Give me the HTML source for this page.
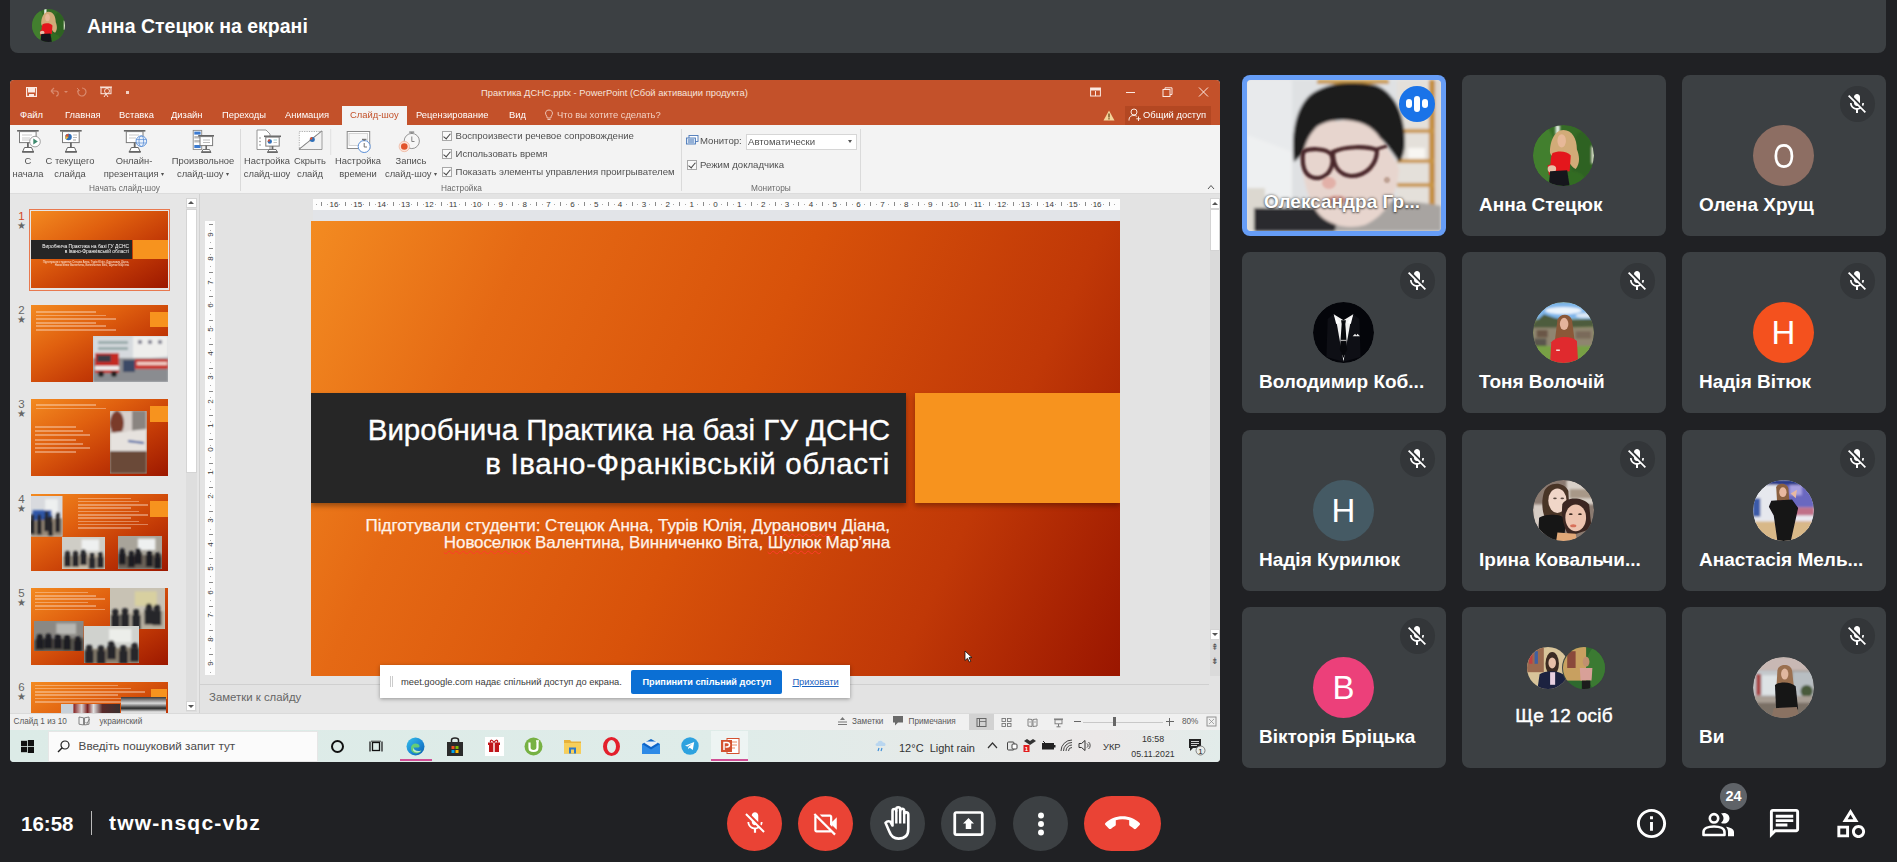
<!DOCTYPE html>
<html><head><meta charset="utf-8">
<style>
*{box-sizing:border-box;margin:0;padding:0}
html,body{width:1897px;height:862px;overflow:hidden;background:#202124;font-family:"Liberation Sans",sans-serif;position:relative}
.a{position:absolute}
.topbar{left:10px;top:0;width:1876px;height:53px;background:#3c4043;border-radius:0 0 8px 8px}
.tile{position:absolute;width:204px;height:161px;background:#3c4043;border-radius:8px;overflow:hidden}
.name{position:absolute;left:17px;top:119px;color:#fff;font-size:19px;font-weight:bold;white-space:nowrap}
.mute{position:absolute;left:157.5px;top:11px;width:35.5px;height:35.5px;border-radius:50%;background:#333639}
.av{position:absolute;left:71px;top:50px;width:61px;height:61px;border-radius:50%;color:#fff;font-size:33px;text-align:center;line-height:62px}
.btn{position:absolute;top:796px;width:55px;height:55px;border-radius:50%;background:#3c4043}
.red{background:#ea4335}
.tabs{color:#fff;font-size:9.4px;white-space:nowrap}
.pt{white-space:nowrap}
.rl{font-size:9.4px;color:#505050;text-align:center;line-height:12.5px;white-space:nowrap}
.rt{font-size:9.6px;color:#505050;line-height:12.5px;white-space:nowrap}
.gl{color:#6a6a6a;font-size:8.3px}
.dd{font-size:6px;vertical-align:1px}
.rn{font-size:8px;color:#3a3a3a;width:12px;text-align:center;line-height:7px}
.sq{text-decoration:underline wavy #ff3b2b;text-decoration-thickness:1.2px;text-underline-offset:1.5px}
.st{font-size:8.2px;color:#5a5a5a;white-space:nowrap;line-height:11px}
.sbi{font-size:9px;color:#555;width:10px;text-align:center;line-height:10px}
.tn{font-size:11.5px;line-height:12px;width:8px;text-align:center}
.ts{font-size:10px;color:#666;line-height:10px;width:11px;text-align:center}
.cb{width:10px;height:10px;border:1px solid #a8a8a8;background:#fafafa}
.cb::after{content:"";position:absolute;left:2px;top:0px;width:3px;height:6px;border:solid #444;border-width:0 1.2px 1.2px 0;transform:rotate(40deg)}
</style></head><body>
<!-- top bar -->
<div class="a topbar"></div>
<svg class="a" style="left:32px;top:9px" width="33" height="33" viewBox="0 0 100 100"><use href="#anna"/></svg>
<div class="a" style="left:87px;top:14.5px;color:#fff;font-size:19.5px;font-weight:bold;white-space:nowrap">Анна Стецюк на екрані</div>

<!-- PPT window placeholder -->
<div class="a" id="ppt" style="left:10px;top:80px;width:1210px;height:682px;background:#e4e4e4;border-radius:4px;overflow:hidden;filter:blur(0.35px)">
<!-- title+tabs -->
<div class="a" style="left:0;top:0;width:1210px;height:45px;background:#c3512a"></div>
<div class="a pt" style="left:471px;top:7px;color:#f6e4dc;font-size:9.4px">Практика ДСНС.pptx - PowerPoint (Сбой активации продукта)</div>
<div class="a tabs" style="top:29px;left:10px">Файл</div>
<div class="a tabs" style="top:29px;left:55px">Главная</div>
<div class="a tabs" style="top:29px;left:109px">Вставка</div>
<div class="a tabs" style="top:29px;left:161px">Дизайн</div>
<div class="a tabs" style="top:29px;left:212px">Переходы</div>
<div class="a tabs" style="top:29px;left:275px">Анимация</div>
<div class="a" style="left:332px;top:26px;width:65px;height:19px;background:#f3f3f3"></div>
<div class="a tabs" style="top:29px;left:340px;color:#c3512a">Слайд-шоу</div>
<div class="a tabs" style="top:29px;left:406px">Рецензирование</div>
<div class="a tabs" style="top:29px;left:499px">Вид</div>
<div class="a tabs" style="top:29px;left:547px;color:#f2d0c2">Что вы хотите сделать?</div>
<div class="a" style="left:1115px;top:26px;width:86px;height:19px;background:#b34722"></div>
<div class="a tabs" style="top:29px;left:1133px">Общий доступ</div>
<!-- ribbon -->
<div class="a" style="left:0;top:45px;width:1210px;height:69px;background:#f3f3f3;border-bottom:1px solid #dcdcdc"></div>
<!-- title bar icons -->
<svg class="a" style="left:15.5px;top:7px" width="11" height="10" viewBox="0 0 11 10"><rect x="0.6" y="0.6" width="9.8" height="8.8" fill="none" stroke="#fbe9e2" stroke-width="1.2"/><rect x="2" y="1" width="7" height="4.5" fill="#fbe9e2"/><rect x="3" y="7" width="5" height="2.5" fill="#fbe9e2"/></svg>
<svg class="a" style="left:39px;top:7px" width="22" height="10" viewBox="0 0 22 10"><path d="M2,4 L5,1 M2,4 L5,7 M2,4 H7 C10,4 10,9 7,9" fill="none" stroke="#d98a6e" stroke-width="1.2"/><path d="M15,4 L17,6 L19,4 Z" fill="#d98a6e"/></svg>
<svg class="a" style="left:66px;top:7px" width="11" height="10" viewBox="0 0 11 10"><path d="M6,1 A4,4 0 1 1 2.5,3" fill="none" stroke="#d98a6e" stroke-width="1.2"/><path d="M1,1 L3.5,3.5 L1,4.5" fill="none" stroke="#d98a6e" stroke-width="1"/></svg>
<svg class="a" style="left:89px;top:5.5px" width="14" height="12" viewBox="0 0 14 12"><rect x="1" y="0.5" width="12" height="1.2" fill="#fbe9e2"/><rect x="2" y="1.7" width="10" height="6" fill="none" stroke="#fbe9e2" stroke-width="1"/><circle cx="8" cy="5" r="2.5" fill="none" stroke="#fbe9e2" stroke-width="0.9"/><path d="M7,8 L5,11 M7,8 L9,11" stroke="#fbe9e2" stroke-width="1"/></svg>
<div class="a" style="left:115.5px;top:11px;width:3px;height:3px;background:#f2d0c2"></div>
<svg class="a" style="left:1080px;top:7px" width="11" height="10" viewBox="0 0 11 10"><rect x="0.6" y="1" width="9.8" height="8" fill="none" stroke="#fbe9e2" stroke-width="1"/><rect x="0.6" y="1" width="9.8" height="2.5" fill="#fbe9e2"/><path d="M5.5,4 V9" stroke="#fbe9e2" stroke-width="1"/></svg>
<div class="a" style="left:1116px;top:12px;width:9px;height:1px;background:#fbe9e2"></div>
<svg class="a" style="left:1152px;top:7px" width="11" height="10" viewBox="0 0 11 10"><rect x="1" y="2.5" width="7" height="7" fill="none" stroke="#fbe9e2" stroke-width="1"/><path d="M3,2.5 V0.8 H10 V7.5 H8" fill="none" stroke="#fbe9e2" stroke-width="1"/></svg>
<svg class="a" style="left:1188px;top:7px" width="11" height="10" viewBox="0 0 11 10"><path d="M1,0.5 L10,9.5 M10,0.5 L1,9.5" stroke="#fbe9e2" stroke-width="1"/></svg>
<svg class="a" style="left:533.5px;top:29px" width="10" height="12" viewBox="0 0 10 12"><path d="M5,1 C2,1 1,3.5 1.8,5.5 C2.5,7 3.2,7.5 3.2,9 H6.8 C6.8,7.5 7.5,7 8.2,5.5 C9,3.5 8,1 5,1 Z" fill="none" stroke="#f2d0c2" stroke-width="0.9"/><path d="M3.5,10.5 H6.5" stroke="#f2d0c2" stroke-width="0.9"/></svg>
<svg class="a" style="left:1093px;top:29.5px" width="12" height="11" viewBox="0 0 12 11"><path d="M6,0.5 L11.5,10.5 H0.5 Z" fill="#f4d49a"/><rect x="5.4" y="3.5" width="1.2" height="4" fill="#5a3a10"/><rect x="5.4" y="8.2" width="1.2" height="1.2" fill="#5a3a10"/></svg>
<svg class="a" style="left:1118px;top:28px" width="14" height="14" viewBox="0 0 14 14"><circle cx="6" cy="4" r="3" fill="none" stroke="#fbe9e2" stroke-width="1"/><path d="M1,12.5 C1,8.5 3,7.5 6,7.5 C7.5,7.5 8.5,8 9,8.5" fill="none" stroke="#fbe9e2" stroke-width="1"/><path d="M10.5,8.5 V13 M8.3,10.8 H12.7" stroke="#fbe9e2" stroke-width="1"/></svg>
<!-- collapse ribbon arrow -->
<svg class="a" style="left:1197px;top:104px" width="8" height="6" viewBox="0 0 8 6"><path d="M1,5 L4,1.5 L7,5" fill="none" stroke="#555" stroke-width="1"/></svg>
<!-- monitor icon -->
<svg class="a" style="left:676px;top:55px" width="13" height="11" viewBox="0 0 13 11"><rect x="3" y="0.5" width="9" height="6" fill="#fff" stroke="#4a78b8" stroke-width="0.9"/><rect x="0.5" y="3" width="9" height="6" fill="#dbe7f5" stroke="#4a78b8" stroke-width="0.9"/><rect x="2" y="4.5" width="6" height="1" fill="#4a78b8"/><rect x="2" y="6.5" width="6" height="1" fill="#4a78b8"/></svg>
<!-- ribbon content -->
<div class="a rl" style="left:-2px;top:75px;width:40px">С<br>начала</div>
<div class="a rl" style="left:30px;top:75px;width:60px">С текущего<br>слайда</div>
<div class="a rl" style="left:84px;top:75px;width:80px">Онлайн-<br>презентация <span class="dd">▾</span></div>
<div class="a rl" style="left:153px;top:75px;width:80px">Произвольное<br>слайд-шоу <span class="dd">▾</span></div>
<div class="a rl gl" style="left:54.5px;top:102px;width:120px">Начать слайд-шоу</div>
<div class="a" style="left:230px;top:49px;width:1px;height:62px;background:#dadada"></div>
<div class="a rl" style="left:227px;top:75px;width:60px">Настройка<br>слайд-шоу</div>
<div class="a rl" style="left:280px;top:75px;width:40px">Скрыть<br>слайд</div>
<div class="a rl" style="left:318px;top:75px;width:60px">Настройка<br>времени</div>
<div class="a rl" style="left:366px;top:75px;width:70px">Запись<br>слайд-шоу <span class="dd">▾</span></div>
<div class="a cb" style="left:432px;top:51px"></div>
<div class="a cb" style="left:432px;top:69px"></div>
<div class="a cb" style="left:432px;top:87px"></div>
<div class="a rt" style="left:445.5px;top:50px">Воспроизвести речевое сопровождение</div>
<div class="a rt" style="left:445.5px;top:68px">Использовать время</div>
<div class="a rt" style="left:445.5px;top:86px">Показать элементы управления проигрывателем</div>
<div class="a rt gl" style="left:431px;top:102px">Настройка</div>
<div class="a" style="left:671px;top:49px;width:1px;height:62px;background:#dadada"></div>
<div class="a rt" style="left:690px;top:55px">Монитор:</div>
<div class="a" style="left:736px;top:54px;width:111px;height:16px;background:#fff;border:1px solid #d6d6d6"></div>
<div class="a rt" style="left:738px;top:56px">Автоматически</div>
<div class="a" style="left:838px;top:60px;width:0;height:0;border-left:2.5px solid transparent;border-right:2.5px solid transparent;border-top:3px solid #555"></div>
<div class="a cb" style="left:677px;top:80px"></div>
<div class="a rt" style="left:690px;top:79px">Режим докладчика</div>
<div class="a rt gl" style="left:741px;top:102px">Мониторы</div>
<div class="a" style="left:850px;top:49px;width:1px;height:62px;background:#dadada"></div>
<!-- ribbon icons -->
<svg class="a" style="left:0;top:45px" width="440" height="30" viewBox="0 0 440 30">
 <g transform="translate(0,-45)">
 <!-- icon1 -->
 <rect x="7.1" y="50" width="21.6" height="1.6" fill="#666"/>
 <rect x="9.5" y="51.6" width="16.6" height="11" fill="#fff" stroke="#7a7a7a" stroke-width="1"/>
 <line x1="12" y1="55" x2="22" y2="55" stroke="#bbb" stroke-width="0.8"/><line x1="12" y1="58" x2="20" y2="58" stroke="#bbb" stroke-width="0.8"/><line x1="12" y1="60" x2="20" y2="60" stroke="#bbb" stroke-width="0.8"/>
 <rect x="17" y="62.6" width="1.8" height="7" fill="#666"/>
 <path d="M12.5,72 L14.5,67.5 L21.5,67.5 L23.5,72 Z" fill="#fff" stroke="#666" stroke-width="1"/>
 <rect x="12" y="71" width="12" height="1.6" fill="#666"/>
 <circle cx="25" cy="61.6" r="5.3" fill="#fff" stroke="#888" stroke-width="0.8"/>
 <path d="M23.3,58.6 L27.8,61.6 L23.3,64.6 Z" fill="#3d8a6e"/>
 <!-- icon2 -->
 <rect x="50" y="50" width="21.7" height="1.6" fill="#666"/>
 <rect x="52.5" y="51.6" width="16.7" height="11" fill="#fff" stroke="#7a7a7a" stroke-width="1"/>
 <circle cx="58.5" cy="57" r="3.3" fill="#2f6fb7"/><path d="M58.5,57 L58.5,53.7 A3.3,3.3 0 0 0 55.3,56.3 Z" fill="#e0532a"/><path d="M58.5,57 L55.3,56.3 A3.3,3.3 0 0 0 56.3,59.4 Z" fill="#f2b632"/>
 <line x1="63" y1="55" x2="67" y2="55" stroke="#aaa" stroke-width="0.8"/><line x1="63" y1="57.5" x2="67" y2="57.5" stroke="#aaa" stroke-width="0.8"/><line x1="63" y1="60" x2="66" y2="60" stroke="#888" stroke-width="0.8"/>
 <rect x="60" y="62.6" width="1.8" height="7" fill="#666"/>
 <path d="M55.5,72 L57.5,67.5 L64.5,67.5 L66.5,72 Z" fill="#fff" stroke="#666" stroke-width="1"/>
 <rect x="55" y="71" width="12" height="1.6" fill="#666"/>
 <!-- icon3 -->
 <rect x="113.9" y="50" width="21.5" height="1.6" fill="#666"/>
 <rect x="116.3" y="51.6" width="16.7" height="11" fill="#fff" stroke="#7a7a7a" stroke-width="1"/>
 <line x1="119" y1="55" x2="129" y2="55" stroke="#bbb" stroke-width="0.8"/><line x1="119" y1="58" x2="126" y2="58" stroke="#bbb" stroke-width="0.8"/>
 <rect x="123.8" y="62.6" width="1.8" height="7" fill="#666"/>
 <path d="M119.3,72 L121.3,67.5 L128.3,67.5 L130.3,72 Z" fill="#fff" stroke="#666" stroke-width="1"/>
 <rect x="118.8" y="71" width="12" height="1.6" fill="#666"/>
 <circle cx="131.3" cy="61.2" r="5.3" fill="#e8f0fb" stroke="#5b8fd6" stroke-width="0.9"/>
 <ellipse cx="131.3" cy="61.2" rx="2.3" ry="5.3" fill="none" stroke="#5b8fd6" stroke-width="0.8"/>
 <line x1="126" y1="59.5" x2="136.6" y2="59.5" stroke="#5b8fd6" stroke-width="0.7"/><line x1="126" y1="63" x2="136.6" y2="63" stroke="#5b8fd6" stroke-width="0.7"/>
 <!-- icon4 -->
 <rect x="183.2" y="50.4" width="8.5" height="19" fill="#fff" stroke="#888" stroke-width="0.9"/>
 <rect x="184.3" y="51.6" width="6.3" height="3" fill="#3b7ad0"/><rect x="184.3" y="56" width="6.3" height="2.5" fill="#bbb"/><rect x="184.3" y="60" width="6.3" height="2.5" fill="#bbb"/><rect x="184.3" y="65" width="6.3" height="3" fill="#3b7ad0"/>
 <rect x="188.2" y="55" width="15.8" height="1.6" fill="#666"/>
 <rect x="190" y="56.6" width="12.6" height="9" fill="#fff" stroke="#7a7a7a" stroke-width="1"/>
 <line x1="193" y1="60" x2="200" y2="60" stroke="#aaa" stroke-width="0.8"/><line x1="193" y1="62.5" x2="200" y2="62.5" stroke="#aaa" stroke-width="0.8"/>
 <rect x="195.4" y="65.6" width="1.6" height="4" fill="#666"/>
 <path d="M191.5,72.5 L193,69.5 L199.5,69.5 L201,72.5 Z" fill="#fff" stroke="#666" stroke-width="0.9"/>
 <rect x="191.5" y="71.2" width="9.5" height="1.5" fill="#666"/>
 <!-- icon5 -->
 <path d="M247,50 L256,50 L260,54 L260,69.5 L247,69.5 Z" fill="#fff" stroke="#8a8a8a" stroke-width="0.9"/>
 <circle cx="250" cy="58" r="0.8" fill="#888"/><circle cx="250" cy="61.5" r="0.8" fill="#888"/><circle cx="250" cy="65" r="0.8" fill="#888"/>
 <rect x="254" y="55.5" width="17" height="1.6" fill="#666"/>
 <rect x="255.8" y="57.1" width="13.4" height="9" fill="#fff" stroke="#7a7a7a" stroke-width="1"/>
 <circle cx="259.8" cy="61.5" r="2.2" fill="#2f6fb7"/><path d="M259.8,61.5 L259.8,59.3 A2.2,2.2 0 0 0 257.6,61.5 Z" fill="#e0532a"/>
 <line x1="263.5" y1="60" x2="267" y2="60" stroke="#7bb" stroke-width="0.7"/><line x1="263.5" y1="62.5" x2="267" y2="62.5" stroke="#aaa" stroke-width="0.7"/>
 <rect x="261.6" y="66.1" width="1.8" height="3.5" fill="#666"/>
 <path d="M257.5,72.5 L259,69.5 L266,69.5 L267.5,72.5 Z" fill="#fff" stroke="#666" stroke-width="0.9"/>
 <rect x="257.5" y="71.2" width="10" height="1.5" fill="#666"/>
 <!-- icon6 -->
 <rect x="289.3" y="51.5" width="22" height="17.5" fill="#fff" stroke="#999" stroke-width="0.8" stroke-dasharray="1.2 1.2"/>
 <path d="M289,69.5 L312,51" stroke="#777" stroke-width="1.1"/>
 <path d="M289,69.5 L312,51 L312,69.5 Z" fill="#f2f2f2" stroke="#888" stroke-width="0.8"/>
 <circle cx="302.3" cy="59.4" r="2.5" fill="#2f6fb7"/><path d="M302.3,59.4 L299.8,59.4 A2.5,2.5 0 0 1 302.3,56.9 Z" fill="#e0532a"/>
 <line x1="320.7" y1="49" x2="320.7" y2="111" stroke="#e0e0e0" stroke-width="1"/>
 <!-- icon7 -->
 <rect x="337.2" y="51.5" width="22.5" height="17" fill="#fff" stroke="#8a8a8a" stroke-width="1"/>
 <rect x="339" y="53.5" width="18.5" height="12" fill="#f7f7f7" stroke="#bbb" stroke-width="0.6"/>
 <circle cx="354.2" cy="66.5" r="6" fill="#fff" stroke="#5b8fd6" stroke-width="1"/>
 <rect x="352" y="58.8" width="4.4" height="1.2" fill="#777"/><rect x="353.6" y="59.8" width="1.2" height="1.4" fill="#777"/>
 <path d="M354.2,63 L354.2,67 L357,67" fill="none" stroke="#666" stroke-width="0.9"/>
 <!-- icon8 -->
 <circle cx="401.8" cy="61" r="7.6" fill="#f6f6f6" stroke="#8a8a8a" stroke-width="0.9"/>
 <rect x="399.2" y="51.5" width="5" height="1.2" fill="#777"/><rect x="401.1" y="52.6" width="1.2" height="1" fill="#777"/>
 <path d="M401.8,56.5 L401.8,61.5 L404.5,61.5" fill="none" stroke="#777" stroke-width="0.9"/>
 <circle cx="394.3" cy="66.5" r="5.2" fill="#fbe3d8" stroke="#e9a58a" stroke-width="0.6"/>
 <circle cx="394.3" cy="66.5" r="3.3" fill="#e2532a"/>
 </g>
</svg>
<!-- slide panel -->
<div class="a" style="left:0;top:114px;width:190px;height:519px;background:#e6e6e6"></div>
<div class="a" style="left:189px;top:114px;width:1px;height:519px;background:#d2d2d2"></div>
<!-- editor -->
<div class="a" style="left:190px;top:114px;width:1020px;height:519px;background:#e3e3e3"></div>
<!-- thumbs -->
<div class="a" style="left:0;top:114px;width:189px;height:519px;overflow:hidden">
<div class="a tn" style="left:7.5px;top:16.0px;color:#d24726">1</div>
<div class="a ts" style="left:6.0px;top:27.0px">★</div>
<div class="a" style="left:19.0px;top:14.5px;width:141.0px;height:82.0px;background:none;border:1.5px solid #e8794f"></div>
<div class="a" style="left:21.0px;top:17.0px;width:137.0px;height:77.0px;background:linear-gradient(150deg,#f38a20 0%,#e0600f 35%,#c43b06 65%,#9c1800 100%);"></div>
<div class="a tn" style="left:7.5px;top:110.0px;color:#666">2</div>
<div class="a ts" style="left:6.0px;top:121.0px">★</div>
<div class="a" style="left:21.0px;top:111.0px;width:137.0px;height:77.0px;background:linear-gradient(150deg,#f38a20 0%,#e0600f 35%,#c43b06 65%,#9c1800 100%);"></div>
<div class="a tn" style="left:7.5px;top:204.0px;color:#666">3</div>
<div class="a ts" style="left:6.0px;top:215.0px">★</div>
<div class="a" style="left:21.0px;top:205.0px;width:137.0px;height:77.0px;background:linear-gradient(150deg,#f38a20 0%,#e0600f 35%,#c43b06 65%,#9c1800 100%);"></div>
<div class="a tn" style="left:7.5px;top:298.5px;color:#666">4</div>
<div class="a ts" style="left:6.0px;top:309.5px">★</div>
<div class="a" style="left:21.0px;top:299.5px;width:137.0px;height:77.0px;background:linear-gradient(150deg,#f38a20 0%,#e0600f 35%,#c43b06 65%,#9c1800 100%);"></div>
<div class="a tn" style="left:7.5px;top:392.5px;color:#666">5</div>
<div class="a ts" style="left:6.0px;top:403.5px">★</div>
<div class="a" style="left:21.0px;top:393.5px;width:137.0px;height:77.0px;background:linear-gradient(150deg,#f38a20 0%,#e0600f 35%,#c43b06 65%,#9c1800 100%);"></div>
<div class="a tn" style="left:7.5px;top:486.5px;color:#666">6</div>
<div class="a ts" style="left:6.0px;top:497.5px">★</div>
<div class="a" style="left:21.0px;top:487.5px;width:137.0px;height:77.0px;background:linear-gradient(150deg,#f38a20 0%,#e0600f 35%,#c43b06 65%,#9c1800 100%);"></div>
<div class="a" style="left:21.0px;top:46.0px;width:100.5px;height:18.5px;background:#262626;"></div>
<div class="a" style="left:123.0px;top:46.0px;width:35.0px;height:18.5px;background:#f7931e;"></div>
<div class="a" style="left:-81.5px;top:48.5px;width:200px;text-align:right;color:#fff;font-size:9.8px;line-height:11.4px;white-space:nowrap;transform:scale(0.5);transform-origin:right top">Виробнича Практика на базі ГУ ДСНС<br>в Івано-Франківській області</div>
<div class="a" style="left:-281.5px;top:66.3px;width:400px;text-align:right;color:#fde8d8;font-size:11.2px;line-height:13.3px;white-space:nowrap;transform:scale(0.25);transform-origin:right top">Підготували студенти: Стецюк Анна, Турів Юлія, Дуранович Діана,<br>Новоселюк Валентина, Винниченко Віта, Шулюк Мар’яна</div>
<div class="a" style="left:139.8px;top:117.5px;width:18.2px;height:15.5px;background:#f7931e;"></div>
<div class="a" style="left:26.0px;top:117.0px;width:60.0px;height:1.8px;background:#fde8d8;opacity:.4;filter:blur(0.5px)"></div>
<div class="a" style="left:26.0px;top:120.6px;width:70.0px;height:1.8px;background:#fde8d8;opacity:.4;filter:blur(0.5px)"></div>
<div class="a" style="left:26.0px;top:124.2px;width:80.0px;height:1.8px;background:#fde8d8;opacity:.4;filter:blur(0.5px)"></div>
<div class="a" style="left:26.0px;top:127.8px;width:60.0px;height:1.8px;background:#fde8d8;opacity:.4;filter:blur(0.5px)"></div>
<div class="a" style="left:26.0px;top:131.4px;width:70.0px;height:1.8px;background:#fde8d8;opacity:.4;filter:blur(0.5px)"></div>
<div class="a" style="left:26.0px;top:135.0px;width:80.0px;height:1.8px;background:#fde8d8;opacity:.4;filter:blur(0.5px)"></div>
<svg class="a" style="left:82.7px;top:142px" width="75.3" height="46" viewBox="0 0 75.3 46"><rect width="75.3" height="46" fill="#c4c8cc"/>
<g filter="url(#bl2)"><rect x="0" y="0" width="75.3" height="22" fill="#d6dade"/><path d="M40,0 L75.3,0 L75.3,20 L40,24 Z" fill="#eeeeec"/><rect x="45" y="4" width="4" height="4" fill="#889"/><rect x="55" y="4" width="4" height="4" fill="#889"/><rect x="65" y="4" width="4" height="4" fill="#889"/><rect x="5" y="5" width="30" height="3" fill="#9aa"/><rect x="5" y="11" width="30" height="3" fill="#9aa"/>
<rect x="0" y="22" width="75.3" height="24" fill="#8a8c90"/><rect x="2" y="17" width="24" height="20" fill="#c42a22"/><rect x="4" y="19" width="14" height="7" fill="#3a3a44"/><rect x="2" y="30" width="24" height="4" fill="#eee"/><circle cx="8" cy="38" r="3" fill="#222"/><circle cx="21" cy="38" r="3" fill="#222"/>
<rect x="30" y="24" width="12" height="12" fill="#3b4a66"/><rect x="42" y="23" width="33" height="10" fill="#c8302a"/><rect x="44" y="26" width="30" height="3" fill="#f2d0c8"/></g></svg>
<div class="a" style="left:139.8px;top:212.0px;width:18.2px;height:16.0px;background:#f7931e;"></div>
<div class="a" style="left:26.0px;top:210.0px;width:60.0px;height:1.8px;background:#fde8d8;opacity:.4;filter:blur(0.5px)"></div>
<div class="a" style="left:26.0px;top:213.6px;width:70.0px;height:1.8px;background:#fde8d8;opacity:.4;filter:blur(0.5px)"></div>
<div class="a" style="left:25.0px;top:232.0px;width:41.2px;height:2.1px;background:#fde8d8;opacity:.4;filter:blur(0.5px)"></div>
<div class="a" style="left:25.0px;top:236.2px;width:48.1px;height:2.1px;background:#fde8d8;opacity:.4;filter:blur(0.5px)"></div>
<div class="a" style="left:25.0px;top:240.4px;width:55.0px;height:2.1px;background:#fde8d8;opacity:.4;filter:blur(0.5px)"></div>
<div class="a" style="left:25.0px;top:244.6px;width:41.2px;height:2.1px;background:#fde8d8;opacity:.4;filter:blur(0.5px)"></div>
<div class="a" style="left:25.0px;top:248.8px;width:48.1px;height:2.1px;background:#fde8d8;opacity:.4;filter:blur(0.5px)"></div>
<div class="a" style="left:25.0px;top:253.0px;width:55.0px;height:2.1px;background:#fde8d8;opacity:.4;filter:blur(0.5px)"></div>
<div class="a" style="left:25.0px;top:257.2px;width:41.2px;height:2.1px;background:#fde8d8;opacity:.4;filter:blur(0.5px)"></div>
<svg class="a" style="left:100.2px;top:217px" width="36.6" height="62.5" viewBox="0 0 36.6 62.5"><rect width="36.6" height="62.5" fill="#b8aaa0"/>
<g filter="url(#bl2)"><rect x="0" y="0" width="36.6" height="20" fill="#d8d0cc"/><ellipse cx="7" cy="12" rx="7" ry="12" fill="#7a3a2a"/><rect x="22" y="0" width="14" height="22" fill="#8a8480"/>
<path d="M0,22 L36.6,18 L36.6,40 L0,42 Z" fill="#e6e2de"/><path d="M18,30 L34,32" stroke="#3a5aa0" stroke-width="2"/><rect x="0" y="40" width="36.6" height="22.5" fill="#6a4a38"/></g></svg>
<div class="a" style="left:139.8px;top:306.5px;width:18.2px;height:16.0px;background:#f7931e;"></div>
<div class="a" style="left:68.0px;top:303.5px;width:52.5px;height:1.6px;background:#fde8d8;opacity:.4;filter:blur(0.5px)"></div>
<div class="a" style="left:68.0px;top:306.8px;width:61.2px;height:1.6px;background:#fde8d8;opacity:.4;filter:blur(0.5px)"></div>
<div class="a" style="left:68.0px;top:310.1px;width:70.0px;height:1.6px;background:#fde8d8;opacity:.4;filter:blur(0.5px)"></div>
<div class="a" style="left:68.0px;top:313.4px;width:52.5px;height:1.6px;background:#fde8d8;opacity:.4;filter:blur(0.5px)"></div>
<div class="a" style="left:68.0px;top:316.7px;width:61.2px;height:1.6px;background:#fde8d8;opacity:.4;filter:blur(0.5px)"></div>
<div class="a" style="left:68.0px;top:320.0px;width:70.0px;height:1.6px;background:#fde8d8;opacity:.4;filter:blur(0.5px)"></div>
<div class="a" style="left:68.0px;top:323.3px;width:52.5px;height:1.6px;background:#fde8d8;opacity:.4;filter:blur(0.5px)"></div>
<div class="a" style="left:68.0px;top:326.6px;width:61.2px;height:1.6px;background:#fde8d8;opacity:.4;filter:blur(0.5px)"></div>
<div class="a" style="left:68.0px;top:329.9px;width:70.0px;height:1.6px;background:#fde8d8;opacity:.4;filter:blur(0.5px)"></div>
<div class="a" style="left:68.0px;top:333.2px;width:52.5px;height:1.6px;background:#fde8d8;opacity:.4;filter:blur(0.5px)"></div>
<svg class="a" style="left:21.0px;top:302.0px" width="31.5" height="40.5" viewBox="0 0 31.5 40.5"><rect width="31.5" height="40.5" fill="#d8dade"/><g filter="url(#bl2)"><rect x="14.2" y="3.2" width="12.6" height="14.2" fill="#eef0f0"/><rect x="1.6" y="14.2" width="18.9" height="10.1" fill="#2f56a8"/><path d="M0,25.1 L31.5,22.3 L31.5,40.5 L0,40.5 Z" fill="#9a8c7a"/><ellipse cx="1.5" cy="21.5" rx="1.9" ry="3.6" fill="#26272b"/><rect x="-1.0" y="24.0" width="5.0" height="14.2" fill="#26272b"/><ellipse cx="8.3" cy="21.9" rx="1.9" ry="3.6" fill="#26272b"/><rect x="5.8" y="24.3" width="5.0" height="14.2" fill="#26272b"/><ellipse cx="15.6" cy="18.6" rx="1.9" ry="3.6" fill="#26272b"/><rect x="13.1" y="21.1" width="5.0" height="14.2" fill="#26272b"/><ellipse cx="19.5" cy="23.3" rx="1.9" ry="3.6" fill="#26272b"/><rect x="17.0" y="25.7" width="5.0" height="14.2" fill="#26272b"/><ellipse cx="26.8" cy="19.6" rx="1.9" ry="3.6" fill="#26272b"/><rect x="24.2" y="22.1" width="5.0" height="14.2" fill="#26272b"/></g></svg>
<svg class="a" style="left:51.5px;top:343.0px" width="43.5" height="32.0" viewBox="0 0 43.5 32.0"><rect width="43.5" height="32.0" fill="#cfcdc6"/><g filter="url(#bl2)"><rect x="19.6" y="2.6" width="17.4" height="11.2" fill="#eef0f0"/><path d="M0,19.8 L43.5,17.6 L43.5,32.0 L0,32.0 Z" fill="#c8bca8"/><ellipse cx="5.5" cy="16.7" rx="2.6" ry="2.9" fill="#26272b"/><rect x="2.0" y="18.6" width="7.0" height="11.2" fill="#26272b"/><ellipse cx="13.5" cy="16.7" rx="2.6" ry="2.9" fill="#26272b"/><rect x="10.0" y="18.6" width="7.0" height="11.2" fill="#26272b"/><ellipse cx="21.4" cy="15.1" rx="2.6" ry="2.9" fill="#26272b"/><rect x="18.0" y="17.0" width="7.0" height="11.2" fill="#26272b"/><ellipse cx="30.1" cy="18.6" rx="2.6" ry="2.9" fill="#26272b"/><rect x="26.6" y="20.5" width="7.0" height="11.2" fill="#26272b"/><ellipse cx="38.4" cy="18.0" rx="2.6" ry="2.9" fill="#26272b"/><rect x="34.9" y="19.9" width="7.0" height="11.2" fill="#26272b"/></g></svg>
<svg class="a" style="left:108.0px;top:342.0px" width="44.0" height="33.0" viewBox="0 0 44.0 33.0"><rect width="44.0" height="33.0" fill="#a8a49a"/><g filter="url(#bl2)"><rect x="19.8" y="2.6" width="17.6" height="11.5" fill="#eef0f0"/><path d="M0,20.5 L44.0,18.2 L44.0,33.0 L0,33.0 Z" fill="#6a6258"/><ellipse cx="4.2" cy="15.2" rx="2.6" ry="3.0" fill="#1e1f22"/><rect x="0.7" y="17.1" width="7.0" height="11.5" fill="#1e1f22"/><ellipse cx="13.4" cy="17.8" rx="2.6" ry="3.0" fill="#1e1f22"/><rect x="9.8" y="19.8" width="7.0" height="11.5" fill="#1e1f22"/><ellipse cx="20.3" cy="15.0" rx="2.6" ry="3.0" fill="#1e1f22"/><rect x="16.8" y="17.0" width="7.0" height="11.5" fill="#1e1f22"/><ellipse cx="31.4" cy="17.2" rx="2.6" ry="3.0" fill="#1e1f22"/><rect x="27.9" y="19.2" width="7.0" height="11.5" fill="#1e1f22"/><ellipse cx="39.6" cy="19.2" rx="2.6" ry="3.0" fill="#1e1f22"/><rect x="36.1" y="21.2" width="7.0" height="11.5" fill="#1e1f22"/></g></svg>
<div class="a" style="left:25.0px;top:397.5px;width:52.5px;height:1.7px;background:#fde8d8;opacity:.4;filter:blur(0.5px)"></div>
<div class="a" style="left:25.0px;top:400.9px;width:61.2px;height:1.7px;background:#fde8d8;opacity:.4;filter:blur(0.5px)"></div>
<div class="a" style="left:25.0px;top:404.3px;width:70.0px;height:1.7px;background:#fde8d8;opacity:.4;filter:blur(0.5px)"></div>
<div class="a" style="left:25.0px;top:407.7px;width:52.5px;height:1.7px;background:#fde8d8;opacity:.4;filter:blur(0.5px)"></div>
<div class="a" style="left:25.0px;top:411.1px;width:61.2px;height:1.7px;background:#fde8d8;opacity:.4;filter:blur(0.5px)"></div>
<div class="a" style="left:25.0px;top:414.5px;width:70.0px;height:1.7px;background:#fde8d8;opacity:.4;filter:blur(0.5px)"></div>
<svg class="a" style="left:100.4px;top:393.7px" width="55.0" height="41.8" viewBox="0 0 55.0 41.8"><rect width="55.0" height="41.8" fill="#c8c2b4"/><g filter="url(#bl2)"><rect x="24.8" y="3.3" width="22.0" height="14.6" fill="#d8d0a0"/><path d="M0,25.9 L55.0,23.0 L55.0,41.8 L0,41.8 Z" fill="#b8b0a0"/><ellipse cx="5.3" cy="24.6" rx="3.3" ry="3.8" fill="#26272b"/><rect x="0.9" y="27.1" width="8.8" height="14.6" fill="#26272b"/><ellipse cx="15.0" cy="23.8" rx="3.3" ry="3.8" fill="#26272b"/><rect x="10.6" y="26.3" width="8.8" height="14.6" fill="#26272b"/><ellipse cx="26.2" cy="24.7" rx="3.3" ry="3.8" fill="#26272b"/><rect x="21.8" y="27.2" width="8.8" height="14.6" fill="#26272b"/><ellipse cx="38.9" cy="19.4" rx="3.3" ry="3.8" fill="#26272b"/><rect x="34.5" y="21.9" width="8.8" height="14.6" fill="#26272b"/><ellipse cx="46.9" cy="20.2" rx="3.3" ry="3.8" fill="#26272b"/><rect x="42.5" y="22.7" width="8.8" height="14.6" fill="#26272b"/></g></svg>
<svg class="a" style="left:24.1px;top:426.5px" width="49.5" height="30.5" viewBox="0 0 49.5 30.5"><rect width="49.5" height="30.5" fill="#8a8884"/><g filter="url(#bl2)"><rect x="22.3" y="2.4" width="19.8" height="10.7" fill="#b8b8b4"/><path d="M0,18.9 L49.5,16.8 L49.5,30.5 L0,30.5 Z" fill="#5a5650"/><ellipse cx="5.8" cy="15.7" rx="3.0" ry="2.7" fill="#1c1c20"/><rect x="1.9" y="17.6" width="7.9" height="10.7" fill="#1c1c20"/><ellipse cx="14.4" cy="15.1" rx="3.0" ry="2.7" fill="#1c1c20"/><rect x="10.4" y="16.9" width="7.9" height="10.7" fill="#1c1c20"/><ellipse cx="23.8" cy="15.5" rx="3.0" ry="2.7" fill="#1c1c20"/><rect x="19.8" y="17.3" width="7.9" height="10.7" fill="#1c1c20"/><ellipse cx="33.1" cy="16.4" rx="3.0" ry="2.7" fill="#1c1c20"/><rect x="29.1" y="18.2" width="7.9" height="10.7" fill="#1c1c20"/><ellipse cx="43.9" cy="17.9" rx="3.0" ry="2.7" fill="#1c1c20"/><rect x="39.9" y="19.7" width="7.9" height="10.7" fill="#1c1c20"/></g></svg>
<svg class="a" style="left:73.6px;top:431.5px" width="55.7" height="37.7" viewBox="0 0 55.7 37.7"><rect width="55.7" height="37.7" fill="#d0d2ce"/><g filter="url(#bl2)"><rect x="25.1" y="3.0" width="22.3" height="13.2" fill="#eceeea"/><path d="M0,23.4 L55.7,20.7 L55.7,37.7 L0,37.7 Z" fill="#8a8070"/><ellipse cx="5.2" cy="22.2" rx="3.3" ry="3.4" fill="#26272b"/><rect x="0.7" y="24.5" width="8.9" height="13.2" fill="#26272b"/><ellipse cx="17.0" cy="22.6" rx="3.3" ry="3.4" fill="#26272b"/><rect x="12.6" y="24.8" width="8.9" height="13.2" fill="#26272b"/><ellipse cx="27.4" cy="17.9" rx="3.3" ry="3.4" fill="#26272b"/><rect x="23.0" y="20.1" width="8.9" height="13.2" fill="#26272b"/><ellipse cx="39.3" cy="22.4" rx="3.3" ry="3.4" fill="#26272b"/><rect x="34.9" y="24.7" width="8.9" height="13.2" fill="#26272b"/><ellipse cx="50.6" cy="20.2" rx="3.3" ry="3.4" fill="#26272b"/><rect x="46.2" y="22.4" width="8.9" height="13.2" fill="#26272b"/></g></svg>
<div class="a" style="left:25.0px;top:490.5px;width:82.5px;height:1.6px;background:#fde8d8;opacity:.4;filter:blur(0.5px)"></div>
<div class="a" style="left:25.0px;top:493.8px;width:96.2px;height:1.6px;background:#fde8d8;opacity:.4;filter:blur(0.5px)"></div>
<div class="a" style="left:25.0px;top:497.1px;width:110.0px;height:1.6px;background:#fde8d8;opacity:.4;filter:blur(0.5px)"></div>
<div class="a" style="left:25.0px;top:500.4px;width:82.5px;height:1.6px;background:#fde8d8;opacity:.4;filter:blur(0.5px)"></div>
<div class="a" style="left:25.0px;top:503.7px;width:96.2px;height:1.6px;background:#fde8d8;opacity:.4;filter:blur(0.5px)"></div>
<div class="a" style="left:25.0px;top:507.0px;width:110.0px;height:1.6px;background:#fde8d8;opacity:.4;filter:blur(0.5px)"></div>
<div class="a" style="left:140.8px;top:494.5px;width:16.2px;height:10.0px;background:#f7931e;"></div>
<div class="a" style="left:51.0px;top:510.0px;width:58.5px;height:17.5px;background:linear-gradient(90deg,#c8d0d8 0%,#c8d0d8 20%,#8a2a2a 22%,#d8d0d0 35%,#7a2222 45%,#e0e0e0 55%,#5a2a2a 70%,#3a3030 100%);"></div>
<div class="a" style="left:111.3px;top:503.0px;width:44.7px;height:24.5px;background:linear-gradient(180deg,#3a3636 0%,#d8d8d8 25%,#2a2a2a 45%,#e8e8e8 60%,#3a3a3a 100%);"></div>
</div>
<div class="a" style="left:175.5px;top:117.5px;width:11px;height:514px;background:#dedede"></div>
<div class="a" style="left:175.5px;top:117.5px;width:11px;height:10.5px;background:#fff;border:1px solid #d4d4d4"></div>
<div class="a" style="left:178px;top:121px;width:0;height:0;border-left:3px solid transparent;border-right:3px solid transparent;border-bottom:3px solid #555"></div>
<div class="a" style="left:175.5px;top:129px;width:11px;height:264px;background:#fff;border:1px solid #d4d4d4"></div>
<div class="a" style="left:176px;top:621px;width:10px;height:10px;background:#fff;border:1px solid #d4d4d4"></div>
<div class="a" style="left:178px;top:624.5px;width:0;height:0;border-left:3px solid transparent;border-right:3px solid transparent;border-top:3px solid #555"></div>

<!-- status bar -->
<div class="a" style="left:0;top:633px;width:1210px;height:17px;background:#f0f0f0;border-top:1px solid #dadada"></div>
<!-- taskbar -->
<div class="a" style="left:0;top:650px;width:1210px;height:32px;background:linear-gradient(90deg,#dcebe7,#dfece9 60%,#ebe8e8 90%,#e2ecea)"></div>
<!-- notes pane -->
<div class="a" style="left:190px;top:604px;width:1009px;height:1px;background:#d0d0d0"></div>
<div class="a" style="left:199px;top:611px;font-size:11.4px;color:#666;white-space:nowrap">Заметки к слайду</div>
<!-- right scrollbar -->
<div class="a" style="left:1199.5px;top:117.5px;width:10.5px;height:478px;background:#dadada"></div>
<div class="a" style="left:1199.5px;top:117.5px;width:10.5px;height:11px;background:#fff;border:1px solid #d4d4d4"></div>
<div class="a" style="left:1202px;top:121.5px;width:0;height:0;border-left:3px solid transparent;border-right:3px solid transparent;border-bottom:3px solid #555"></div>
<div class="a" style="left:1199.5px;top:128.5px;width:10.5px;height:42px;background:#fff;border:1px solid #d4d4d4"></div>
<div class="a" style="left:1199.5px;top:549px;width:10.5px;height:11px;background:#fff;border:1px solid #d4d4d4"></div>
<div class="a" style="left:1202px;top:553px;width:0;height:0;border-left:3px solid transparent;border-right:3px solid transparent;border-top:3px solid #555"></div>
<div class="a sbi" style="left:1200px;top:562px">⇞</div>
<div class="a sbi" style="left:1200px;top:576px">⇟</div>
<!-- status bar content -->
<div class="a st" style="left:3.5px;top:636px">Слайд 1 из 10</div>
<svg class="a" style="left:67.5px;top:636px" width="12" height="10" viewBox="0 0 12 10"><path d="M1,1 L5.5,1.8 L5.5,9 L1,8.2 Z M11,1 L6.5,1.8 L6.5,9 L11,8.2 Z" fill="none" stroke="#777" stroke-width="0.9"/><path d="M7.5,6 L9,7.5 L11.5,3" fill="none" stroke="#777" stroke-width="0.9"/></svg>
<div class="a st" style="left:89.5px;top:636px">украинский</div>
<svg class="a" style="left:827px;top:636px" width="11" height="11" viewBox="0 0 11 11"><path d="M5.5,1 L8,4 L3,4 Z" fill="#777"/><line x1="1" y1="6" x2="10" y2="6" stroke="#777" stroke-width="1"/><line x1="1" y1="8.5" x2="10" y2="8.5" stroke="#777" stroke-width="1"/></svg>
<div class="a st" style="left:842px;top:636px">Заметки</div>
<svg class="a" style="left:882px;top:635px" width="12" height="12" viewBox="0 0 12 12"><path d="M1,1 H11 V7.5 H6 L3,10.5 V7.5 H1 Z" fill="#6a6a6a"/></svg>
<div class="a st" style="left:898.5px;top:636px">Примечания</div>
<div class="a" style="left:958.5px;top:633.5px;width:25.5px;height:16.5px;background:#d2d2d2"></div>
<svg class="a" style="left:966px;top:636.5px" width="11" height="11" viewBox="0 0 11 11"><rect x="1" y="1.5" width="9" height="8" fill="none" stroke="#666" stroke-width="1"/><line x1="3.5" y1="1.5" x2="3.5" y2="9.5" stroke="#666" stroke-width="1"/><line x1="3.5" y1="4.5" x2="10" y2="4.5" stroke="#666" stroke-width="0.8"/></svg>
<svg class="a" style="left:991px;top:636.5px" width="11" height="11" viewBox="0 0 11 11"><rect x="1" y="1.5" width="3.5" height="3" fill="none" stroke="#777" stroke-width="0.9"/><rect x="6.5" y="1.5" width="3.5" height="3" fill="none" stroke="#777" stroke-width="0.9"/><rect x="1" y="6.5" width="3.5" height="3" fill="none" stroke="#777" stroke-width="0.9"/><rect x="6.5" y="6.5" width="3.5" height="3" fill="none" stroke="#777" stroke-width="0.9"/></svg>
<svg class="a" style="left:1017px;top:636.5px" width="11" height="11" viewBox="0 0 11 11"><path d="M1,2 L5,2.5 L5,9.5 L1,9 Z M10,2 L6,2.5 L6,9.5 L10,9 Z" fill="none" stroke="#777" stroke-width="0.9"/><line x1="2" y1="5" x2="4" y2="5" stroke="#777" stroke-width="0.6"/><line x1="7" y1="5" x2="9" y2="5" stroke="#777" stroke-width="0.6"/></svg>
<svg class="a" style="left:1043px;top:636.5px" width="11" height="11" viewBox="0 0 11 11"><rect x="1" y="1.5" width="9" height="1.3" fill="#777"/><rect x="2" y="2.8" width="7" height="4" fill="none" stroke="#777" stroke-width="0.9"/><line x1="5.5" y1="7" x2="5.5" y2="9.5" stroke="#777" stroke-width="1"/><line x1="3.5" y1="9.8" x2="7.5" y2="9.8" stroke="#777" stroke-width="1"/></svg>
<div class="a" style="left:1063.5px;top:641px;width:7px;height:1.3px;background:#666"></div>
<div class="a" style="left:1073px;top:641.5px;width:80px;height:1px;background:#c8c8c8"></div>
<div class="a" style="left:1103px;top:637px;width:3px;height:9px;background:#666"></div>
<div class="a" style="left:1155.5px;top:641px;width:8px;height:1.3px;background:#666"></div>
<div class="a" style="left:1159px;top:637.5px;width:1.3px;height:8px;background:#666"></div>
<div class="a st" style="left:1172px;top:636px">80%</div>
<svg class="a" style="left:1196px;top:636px" width="11" height="11" viewBox="0 0 11 11"><rect x="1" y="1" width="9" height="9" fill="none" stroke="#888" stroke-width="0.9"/><path d="M3,3 L8,8 M8,3 L3,8" stroke="#888" stroke-width="0.7"/></svg>
<!-- rulers -->
<div class="a" style="left:303px;top:119px;width:807px;height:10.5px;background:#fdfdfd"></div>
<div class="a" style="left:303px;top:129.5px;width:807px;height:11px;background:#e2e4e8"></div>
<div class="a" style="left:195.3px;top:140.5px;width:10.2px;height:454px;background:#fdfdfd"></div>
<div class="a rn" style="left:317.90px;top:120.5px">16</div>
<div class="a" style="left:329.36px;top:123.5px;width:1px;height:1px;background:#aaa"></div>
<div class="a" style="left:335.32px;top:122px;width:1px;height:4px;background:#8a8a8a"></div>
<div class="a" style="left:341.29px;top:123.5px;width:1px;height:1px;background:#aaa"></div>
<div class="a rn" style="left:341.75px;top:120.5px">15</div>
<div class="a" style="left:353.21px;top:123.5px;width:1px;height:1px;background:#aaa"></div>
<div class="a" style="left:359.18px;top:122px;width:1px;height:4px;background:#8a8a8a"></div>
<div class="a" style="left:365.14px;top:123.5px;width:1px;height:1px;background:#aaa"></div>
<div class="a rn" style="left:365.60px;top:120.5px">14</div>
<div class="a" style="left:377.06px;top:123.5px;width:1px;height:1px;background:#aaa"></div>
<div class="a" style="left:383.02px;top:122px;width:1px;height:4px;background:#8a8a8a"></div>
<div class="a" style="left:388.99px;top:123.5px;width:1px;height:1px;background:#aaa"></div>
<div class="a rn" style="left:389.45px;top:120.5px">13</div>
<div class="a" style="left:400.91px;top:123.5px;width:1px;height:1px;background:#aaa"></div>
<div class="a" style="left:406.88px;top:122px;width:1px;height:4px;background:#8a8a8a"></div>
<div class="a" style="left:412.84px;top:123.5px;width:1px;height:1px;background:#aaa"></div>
<div class="a rn" style="left:413.30px;top:120.5px">12</div>
<div class="a" style="left:424.76px;top:123.5px;width:1px;height:1px;background:#aaa"></div>
<div class="a" style="left:430.72px;top:122px;width:1px;height:4px;background:#8a8a8a"></div>
<div class="a" style="left:436.69px;top:123.5px;width:1px;height:1px;background:#aaa"></div>
<div class="a rn" style="left:437.15px;top:120.5px">11</div>
<div class="a" style="left:448.61px;top:123.5px;width:1px;height:1px;background:#aaa"></div>
<div class="a" style="left:454.57px;top:122px;width:1px;height:4px;background:#8a8a8a"></div>
<div class="a" style="left:460.54px;top:123.5px;width:1px;height:1px;background:#aaa"></div>
<div class="a rn" style="left:461.00px;top:120.5px">10</div>
<div class="a" style="left:472.46px;top:123.5px;width:1px;height:1px;background:#aaa"></div>
<div class="a" style="left:478.43px;top:122px;width:1px;height:4px;background:#8a8a8a"></div>
<div class="a" style="left:484.39px;top:123.5px;width:1px;height:1px;background:#aaa"></div>
<div class="a rn" style="left:484.85px;top:120.5px">9</div>
<div class="a" style="left:496.31px;top:123.5px;width:1px;height:1px;background:#aaa"></div>
<div class="a" style="left:502.28px;top:122px;width:1px;height:4px;background:#8a8a8a"></div>
<div class="a" style="left:508.24px;top:123.5px;width:1px;height:1px;background:#aaa"></div>
<div class="a rn" style="left:508.70px;top:120.5px">8</div>
<div class="a" style="left:520.16px;top:123.5px;width:1px;height:1px;background:#aaa"></div>
<div class="a" style="left:526.12px;top:122px;width:1px;height:4px;background:#8a8a8a"></div>
<div class="a" style="left:532.09px;top:123.5px;width:1px;height:1px;background:#aaa"></div>
<div class="a rn" style="left:532.55px;top:120.5px">7</div>
<div class="a" style="left:544.01px;top:123.5px;width:1px;height:1px;background:#aaa"></div>
<div class="a" style="left:549.97px;top:122px;width:1px;height:4px;background:#8a8a8a"></div>
<div class="a" style="left:555.94px;top:123.5px;width:1px;height:1px;background:#aaa"></div>
<div class="a rn" style="left:556.40px;top:120.5px">6</div>
<div class="a" style="left:567.86px;top:123.5px;width:1px;height:1px;background:#aaa"></div>
<div class="a" style="left:573.82px;top:122px;width:1px;height:4px;background:#8a8a8a"></div>
<div class="a" style="left:579.79px;top:123.5px;width:1px;height:1px;background:#aaa"></div>
<div class="a rn" style="left:580.25px;top:120.5px">5</div>
<div class="a" style="left:591.71px;top:123.5px;width:1px;height:1px;background:#aaa"></div>
<div class="a" style="left:597.67px;top:122px;width:1px;height:4px;background:#8a8a8a"></div>
<div class="a" style="left:603.64px;top:123.5px;width:1px;height:1px;background:#aaa"></div>
<div class="a rn" style="left:604.10px;top:120.5px">4</div>
<div class="a" style="left:615.56px;top:123.5px;width:1px;height:1px;background:#aaa"></div>
<div class="a" style="left:621.52px;top:122px;width:1px;height:4px;background:#8a8a8a"></div>
<div class="a" style="left:627.49px;top:123.5px;width:1px;height:1px;background:#aaa"></div>
<div class="a rn" style="left:627.95px;top:120.5px">3</div>
<div class="a" style="left:639.41px;top:123.5px;width:1px;height:1px;background:#aaa"></div>
<div class="a" style="left:645.38px;top:122px;width:1px;height:4px;background:#8a8a8a"></div>
<div class="a" style="left:651.34px;top:123.5px;width:1px;height:1px;background:#aaa"></div>
<div class="a rn" style="left:651.80px;top:120.5px">2</div>
<div class="a" style="left:663.26px;top:123.5px;width:1px;height:1px;background:#aaa"></div>
<div class="a" style="left:669.22px;top:122px;width:1px;height:4px;background:#8a8a8a"></div>
<div class="a" style="left:675.19px;top:123.5px;width:1px;height:1px;background:#aaa"></div>
<div class="a rn" style="left:675.65px;top:120.5px">1</div>
<div class="a" style="left:687.11px;top:123.5px;width:1px;height:1px;background:#aaa"></div>
<div class="a" style="left:693.07px;top:122px;width:1px;height:4px;background:#8a8a8a"></div>
<div class="a" style="left:699.04px;top:123.5px;width:1px;height:1px;background:#aaa"></div>
<div class="a rn" style="left:699.50px;top:120.5px">0</div>
<div class="a" style="left:710.96px;top:123.5px;width:1px;height:1px;background:#aaa"></div>
<div class="a" style="left:716.92px;top:122px;width:1px;height:4px;background:#8a8a8a"></div>
<div class="a" style="left:722.89px;top:123.5px;width:1px;height:1px;background:#aaa"></div>
<div class="a rn" style="left:723.35px;top:120.5px">1</div>
<div class="a" style="left:734.81px;top:123.5px;width:1px;height:1px;background:#aaa"></div>
<div class="a" style="left:740.77px;top:122px;width:1px;height:4px;background:#8a8a8a"></div>
<div class="a" style="left:746.74px;top:123.5px;width:1px;height:1px;background:#aaa"></div>
<div class="a rn" style="left:747.20px;top:120.5px">2</div>
<div class="a" style="left:758.66px;top:123.5px;width:1px;height:1px;background:#aaa"></div>
<div class="a" style="left:764.62px;top:122px;width:1px;height:4px;background:#8a8a8a"></div>
<div class="a" style="left:770.59px;top:123.5px;width:1px;height:1px;background:#aaa"></div>
<div class="a rn" style="left:771.05px;top:120.5px">3</div>
<div class="a" style="left:782.51px;top:123.5px;width:1px;height:1px;background:#aaa"></div>
<div class="a" style="left:788.47px;top:122px;width:1px;height:4px;background:#8a8a8a"></div>
<div class="a" style="left:794.44px;top:123.5px;width:1px;height:1px;background:#aaa"></div>
<div class="a rn" style="left:794.90px;top:120.5px">4</div>
<div class="a" style="left:806.36px;top:123.5px;width:1px;height:1px;background:#aaa"></div>
<div class="a" style="left:812.32px;top:122px;width:1px;height:4px;background:#8a8a8a"></div>
<div class="a" style="left:818.29px;top:123.5px;width:1px;height:1px;background:#aaa"></div>
<div class="a rn" style="left:818.75px;top:120.5px">5</div>
<div class="a" style="left:830.21px;top:123.5px;width:1px;height:1px;background:#aaa"></div>
<div class="a" style="left:836.17px;top:122px;width:1px;height:4px;background:#8a8a8a"></div>
<div class="a" style="left:842.14px;top:123.5px;width:1px;height:1px;background:#aaa"></div>
<div class="a rn" style="left:842.60px;top:120.5px">6</div>
<div class="a" style="left:854.06px;top:123.5px;width:1px;height:1px;background:#aaa"></div>
<div class="a" style="left:860.02px;top:122px;width:1px;height:4px;background:#8a8a8a"></div>
<div class="a" style="left:865.99px;top:123.5px;width:1px;height:1px;background:#aaa"></div>
<div class="a rn" style="left:866.45px;top:120.5px">7</div>
<div class="a" style="left:877.91px;top:123.5px;width:1px;height:1px;background:#aaa"></div>
<div class="a" style="left:883.88px;top:122px;width:1px;height:4px;background:#8a8a8a"></div>
<div class="a" style="left:889.84px;top:123.5px;width:1px;height:1px;background:#aaa"></div>
<div class="a rn" style="left:890.30px;top:120.5px">8</div>
<div class="a" style="left:901.76px;top:123.5px;width:1px;height:1px;background:#aaa"></div>
<div class="a" style="left:907.72px;top:122px;width:1px;height:4px;background:#8a8a8a"></div>
<div class="a" style="left:913.69px;top:123.5px;width:1px;height:1px;background:#aaa"></div>
<div class="a rn" style="left:914.15px;top:120.5px">9</div>
<div class="a" style="left:925.61px;top:123.5px;width:1px;height:1px;background:#aaa"></div>
<div class="a" style="left:931.57px;top:122px;width:1px;height:4px;background:#8a8a8a"></div>
<div class="a" style="left:937.54px;top:123.5px;width:1px;height:1px;background:#aaa"></div>
<div class="a rn" style="left:938.00px;top:120.5px">10</div>
<div class="a" style="left:949.46px;top:123.5px;width:1px;height:1px;background:#aaa"></div>
<div class="a" style="left:955.42px;top:122px;width:1px;height:4px;background:#8a8a8a"></div>
<div class="a" style="left:961.39px;top:123.5px;width:1px;height:1px;background:#aaa"></div>
<div class="a rn" style="left:961.85px;top:120.5px">11</div>
<div class="a" style="left:973.31px;top:123.5px;width:1px;height:1px;background:#aaa"></div>
<div class="a" style="left:979.27px;top:122px;width:1px;height:4px;background:#8a8a8a"></div>
<div class="a" style="left:985.24px;top:123.5px;width:1px;height:1px;background:#aaa"></div>
<div class="a rn" style="left:985.70px;top:120.5px">12</div>
<div class="a" style="left:997.16px;top:123.5px;width:1px;height:1px;background:#aaa"></div>
<div class="a" style="left:1003.12px;top:122px;width:1px;height:4px;background:#8a8a8a"></div>
<div class="a" style="left:1009.09px;top:123.5px;width:1px;height:1px;background:#aaa"></div>
<div class="a rn" style="left:1009.55px;top:120.5px">13</div>
<div class="a" style="left:1021.01px;top:123.5px;width:1px;height:1px;background:#aaa"></div>
<div class="a" style="left:1026.97px;top:122px;width:1px;height:4px;background:#8a8a8a"></div>
<div class="a" style="left:1032.94px;top:123.5px;width:1px;height:1px;background:#aaa"></div>
<div class="a rn" style="left:1033.40px;top:120.5px">14</div>
<div class="a" style="left:1044.86px;top:123.5px;width:1px;height:1px;background:#aaa"></div>
<div class="a" style="left:1050.83px;top:122px;width:1px;height:4px;background:#8a8a8a"></div>
<div class="a" style="left:1056.79px;top:123.5px;width:1px;height:1px;background:#aaa"></div>
<div class="a rn" style="left:1057.25px;top:120.5px">15</div>
<div class="a" style="left:1068.71px;top:123.5px;width:1px;height:1px;background:#aaa"></div>
<div class="a" style="left:1074.67px;top:122px;width:1px;height:4px;background:#8a8a8a"></div>
<div class="a" style="left:1080.64px;top:123.5px;width:1px;height:1px;background:#aaa"></div>
<div class="a rn" style="left:1081.10px;top:120.5px">16</div>
<div class="a rn" style="left:194.40px;top:150.85px;transform:rotate(-90deg)">9</div>
<div class="a" style="left:200px;top:162.31px;width:1px;height:1px;background:#aaa"></div>
<div class="a" style="left:198.5px;top:168.28px;width:4px;height:1px;background:#8a8a8a"></div>
<div class="a" style="left:200px;top:174.24px;width:1px;height:1px;background:#aaa"></div>
<div class="a rn" style="left:194.40px;top:174.70px;transform:rotate(-90deg)">8</div>
<div class="a" style="left:200px;top:186.16px;width:1px;height:1px;background:#aaa"></div>
<div class="a" style="left:198.5px;top:192.12px;width:4px;height:1px;background:#8a8a8a"></div>
<div class="a" style="left:200px;top:198.09px;width:1px;height:1px;background:#aaa"></div>
<div class="a rn" style="left:194.40px;top:198.55px;transform:rotate(-90deg)">7</div>
<div class="a" style="left:200px;top:210.01px;width:1px;height:1px;background:#aaa"></div>
<div class="a" style="left:198.5px;top:215.97px;width:4px;height:1px;background:#8a8a8a"></div>
<div class="a" style="left:200px;top:221.94px;width:1px;height:1px;background:#aaa"></div>
<div class="a rn" style="left:194.40px;top:222.40px;transform:rotate(-90deg)">6</div>
<div class="a" style="left:200px;top:233.86px;width:1px;height:1px;background:#aaa"></div>
<div class="a" style="left:198.5px;top:239.82px;width:4px;height:1px;background:#8a8a8a"></div>
<div class="a" style="left:200px;top:245.79px;width:1px;height:1px;background:#aaa"></div>
<div class="a rn" style="left:194.40px;top:246.25px;transform:rotate(-90deg)">5</div>
<div class="a" style="left:200px;top:257.71px;width:1px;height:1px;background:#aaa"></div>
<div class="a" style="left:198.5px;top:263.68px;width:4px;height:1px;background:#8a8a8a"></div>
<div class="a" style="left:200px;top:269.64px;width:1px;height:1px;background:#aaa"></div>
<div class="a rn" style="left:194.40px;top:270.10px;transform:rotate(-90deg)">4</div>
<div class="a" style="left:200px;top:281.56px;width:1px;height:1px;background:#aaa"></div>
<div class="a" style="left:198.5px;top:287.53px;width:4px;height:1px;background:#8a8a8a"></div>
<div class="a" style="left:200px;top:293.49px;width:1px;height:1px;background:#aaa"></div>
<div class="a rn" style="left:194.40px;top:293.95px;transform:rotate(-90deg)">3</div>
<div class="a" style="left:200px;top:305.41px;width:1px;height:1px;background:#aaa"></div>
<div class="a" style="left:198.5px;top:311.38px;width:4px;height:1px;background:#8a8a8a"></div>
<div class="a" style="left:200px;top:317.34px;width:1px;height:1px;background:#aaa"></div>
<div class="a rn" style="left:194.40px;top:317.80px;transform:rotate(-90deg)">2</div>
<div class="a" style="left:200px;top:329.26px;width:1px;height:1px;background:#aaa"></div>
<div class="a" style="left:198.5px;top:335.23px;width:4px;height:1px;background:#8a8a8a"></div>
<div class="a" style="left:200px;top:341.19px;width:1px;height:1px;background:#aaa"></div>
<div class="a rn" style="left:194.40px;top:341.65px;transform:rotate(-90deg)">1</div>
<div class="a" style="left:200px;top:353.11px;width:1px;height:1px;background:#aaa"></div>
<div class="a" style="left:198.5px;top:359.07px;width:4px;height:1px;background:#8a8a8a"></div>
<div class="a" style="left:200px;top:365.04px;width:1px;height:1px;background:#aaa"></div>
<div class="a rn" style="left:194.40px;top:365.50px;transform:rotate(-90deg)">0</div>
<div class="a" style="left:200px;top:376.96px;width:1px;height:1px;background:#aaa"></div>
<div class="a" style="left:198.5px;top:382.93px;width:4px;height:1px;background:#8a8a8a"></div>
<div class="a" style="left:200px;top:388.89px;width:1px;height:1px;background:#aaa"></div>
<div class="a rn" style="left:194.40px;top:389.35px;transform:rotate(-90deg)">1</div>
<div class="a" style="left:200px;top:400.81px;width:1px;height:1px;background:#aaa"></div>
<div class="a" style="left:198.5px;top:406.78px;width:4px;height:1px;background:#8a8a8a"></div>
<div class="a" style="left:200px;top:412.74px;width:1px;height:1px;background:#aaa"></div>
<div class="a rn" style="left:194.40px;top:413.20px;transform:rotate(-90deg)">2</div>
<div class="a" style="left:200px;top:424.66px;width:1px;height:1px;background:#aaa"></div>
<div class="a" style="left:198.5px;top:430.62px;width:4px;height:1px;background:#8a8a8a"></div>
<div class="a" style="left:200px;top:436.59px;width:1px;height:1px;background:#aaa"></div>
<div class="a rn" style="left:194.40px;top:437.05px;transform:rotate(-90deg)">3</div>
<div class="a" style="left:200px;top:448.51px;width:1px;height:1px;background:#aaa"></div>
<div class="a" style="left:198.5px;top:454.48px;width:4px;height:1px;background:#8a8a8a"></div>
<div class="a" style="left:200px;top:460.44px;width:1px;height:1px;background:#aaa"></div>
<div class="a rn" style="left:194.40px;top:460.90px;transform:rotate(-90deg)">4</div>
<div class="a" style="left:200px;top:472.36px;width:1px;height:1px;background:#aaa"></div>
<div class="a" style="left:198.5px;top:478.32px;width:4px;height:1px;background:#8a8a8a"></div>
<div class="a" style="left:200px;top:484.29px;width:1px;height:1px;background:#aaa"></div>
<div class="a rn" style="left:194.40px;top:484.75px;transform:rotate(-90deg)">5</div>
<div class="a" style="left:200px;top:496.21px;width:1px;height:1px;background:#aaa"></div>
<div class="a" style="left:198.5px;top:502.18px;width:4px;height:1px;background:#8a8a8a"></div>
<div class="a" style="left:200px;top:508.14px;width:1px;height:1px;background:#aaa"></div>
<div class="a rn" style="left:194.40px;top:508.60px;transform:rotate(-90deg)">6</div>
<div class="a" style="left:200px;top:520.06px;width:1px;height:1px;background:#aaa"></div>
<div class="a" style="left:198.5px;top:526.02px;width:4px;height:1px;background:#8a8a8a"></div>
<div class="a" style="left:200px;top:531.99px;width:1px;height:1px;background:#aaa"></div>
<div class="a rn" style="left:194.40px;top:532.45px;transform:rotate(-90deg)">7</div>
<div class="a" style="left:200px;top:543.91px;width:1px;height:1px;background:#aaa"></div>
<div class="a" style="left:198.5px;top:549.88px;width:4px;height:1px;background:#8a8a8a"></div>
<div class="a" style="left:200px;top:555.84px;width:1px;height:1px;background:#aaa"></div>
<div class="a rn" style="left:194.40px;top:556.30px;transform:rotate(-90deg)">8</div>
<div class="a" style="left:200px;top:567.76px;width:1px;height:1px;background:#aaa"></div>
<div class="a" style="left:198.5px;top:573.72px;width:4px;height:1px;background:#8a8a8a"></div>
<div class="a" style="left:200px;top:579.69px;width:1px;height:1px;background:#aaa"></div>
<div class="a rn" style="left:194.40px;top:580.15px;transform:rotate(-90deg)">9</div>
<div class="a" style="left:200px;top:591.61px;width:1px;height:1px;background:#aaa"></div>
<div class="a" style="left:305.51px;top:123.5px;width:1px;height:1px;background:#aaa"></div>
<div class="a" style="left:311.47px;top:122px;width:1px;height:4px;background:#8a8a8a"></div>
<div class="a" style="left:317.44px;top:123.5px;width:1px;height:1px;background:#aaa"></div>
<div class="a" style="left:1092.56px;top:123.5px;width:1px;height:1px;background:#aaa"></div>
<div class="a" style="left:1098.52px;top:122px;width:1px;height:4px;background:#8a8a8a"></div>
<div class="a" style="left:1104.49px;top:123.5px;width:1px;height:1px;background:#aaa"></div>
<div class="a" style="left:198.5px;top:144.42px;width:4px;height:1px;background:#8a8a8a"></div>
<div class="a" style="left:200px;top:150.39px;width:1px;height:1px;background:#aaa"></div>
<!-- taskbar content -->
<svg class="a" style="left:11px;top:659.5px" width="13" height="13" viewBox="0 0 13 13"><rect x="0" y="0.8" width="6" height="5.3" fill="#111"/><rect x="6.8" y="0" width="6.2" height="6.1" fill="#111"/><rect x="0" y="6.9" width="6" height="5.3" fill="#111"/><rect x="6.8" y="6.9" width="6.2" height="6.1" fill="#111"/></svg>
<div class="a" style="left:37.6px;top:650.8px;width:270.5px;height:31.2px;background:#fbfbfb;border:1px solid #e6e6e6"></div>
<svg class="a" style="left:46.5px;top:659.5px" width="13" height="13" viewBox="0 0 13 13"><circle cx="8" cy="5" r="4" fill="none" stroke="#222" stroke-width="1.2"/><line x1="5.2" y1="7.8" x2="1" y2="12" stroke="#222" stroke-width="1.4"/></svg>
<div class="a" style="left:68.6px;top:659px;font-size:11.7px;color:#4a4a4a;white-space:nowrap;line-height:14px">Введіть пошуковий запит тут</div>
<div class="a" style="left:320.5px;top:659.5px;width:13px;height:13px;border:2.1px solid #111;border-radius:50%"></div>
<svg class="a" style="left:358.5px;top:660px" width="14" height="13" viewBox="0 0 14 13"><rect x="3.5" y="2.5" width="7" height="8" fill="none" stroke="#111" stroke-width="1.3"/><line x1="1" y1="1.5" x2="1" y2="11.5" stroke="#111" stroke-width="1.2"/><line x1="13" y1="1.5" x2="13" y2="11.5" stroke="#111" stroke-width="1.2"/><line x1="2" y1="1.2" x2="12" y2="1.2" stroke="#111" stroke-width="0.8"/></svg>
<!-- edge -->
<svg class="a" style="left:396px;top:657px" width="19" height="19" viewBox="0 0 19 19"><defs><linearGradient id="eg" x1="0" y1="0" x2="1" y2="1"><stop offset="0" stop-color="#36c0e8"/><stop offset="0.5" stop-color="#1f8ed8"/><stop offset="1" stop-color="#0c5fb0"/></linearGradient></defs><circle cx="9.5" cy="9.5" r="9" fill="url(#eg)"/><path d="M5,11 C5,7 9,5.5 12,7 C14,8 14,10 12.5,10.5 L7.5,10.5 C7.8,13.5 11,15 15.5,13.5 C13.5,17 8,17.5 5.5,14" fill="#6dd36a" opacity="0.9"/><path d="M7.5,10.5 C7.8,13.5 11,15 15.5,13.5 C13,16 9,16 7,13.5 Z" fill="#fff" opacity="0.6"/></svg>
<div class="a" style="left:390px;top:679.3px;width:31.8px;height:2px;background:#d04f95"></div>
<!-- store -->
<svg class="a" style="left:435.5px;top:656.5px" width="18" height="20" viewBox="0 0 18 20"><path d="M5.5,5 V3 C5.5,1.5 6.5,1 9,1 C11.5,1 12.5,1.5 12.5,3 V5" fill="none" stroke="#222" stroke-width="1.5"/><rect x="1" y="5" width="16" height="14" fill="#2b2b2b"/><rect x="5.5" y="9" width="3" height="3" fill="#f25022"/><rect x="9.5" y="9" width="3" height="3" fill="#7fba00"/><rect x="5.5" y="13" width="3" height="3" fill="#00a4ef"/><rect x="9.5" y="13" width="3" height="3" fill="#ffb900"/></svg>
<!-- gift -->
<div class="a" style="left:474.5px;top:656.5px;width:19px;height:19px;background:#fff"></div>
<svg class="a" style="left:478px;top:659px" width="12" height="14" viewBox="0 0 12 14"><rect x="1" y="5" width="10" height="8" fill="#c0161a"/><rect x="0" y="3.5" width="12" height="2.5" fill="#c0161a"/><rect x="5.3" y="3.5" width="1.4" height="9.5" fill="#fff"/><path d="M6,3.5 C4,0 1,1 3,3.5 M6,3.5 C8,0 11,1 9,3.5" fill="none" stroke="#c0161a" stroke-width="1.2"/></svg>
<!-- utorrent -->
<svg class="a" style="left:514px;top:656.5px" width="19" height="19" viewBox="0 0 19 19"><circle cx="9.5" cy="9.5" r="9" fill="#77b143"/><path d="M5.5,5.5 V10.5 C5.5,13 7,14 9.5,14 C12,14 13.5,13 13.5,10.5 V4.5" fill="none" stroke="#fff" stroke-width="2.2"/><path d="M12,4 L15,4" stroke="#fff" stroke-width="1.5"/></svg>
<!-- explorer -->
<svg class="a" style="left:553px;top:657.5px" width="19" height="17" viewBox="0 0 19 17"><path d="M1,2 H7 L8.5,3.5 H18 V15.5 H1 Z" fill="#e8b23a"/><rect x="1" y="5" width="17" height="10.5" fill="#f7cf5a"/><rect x="6" y="9.5" width="7" height="6" fill="#2f78c8"/><rect x="8" y="11.5" width="3" height="4" fill="#f7cf5a"/></svg>
<!-- opera -->
<div class="a" style="left:593px;top:656.5px;width:17px;height:19px;border-radius:50%;border:3px solid #e3202c;border-left-width:4.8px;border-right-width:4.8px"></div>
<!-- mail -->
<svg class="a" style="left:631px;top:657.5px" width="20" height="17" viewBox="0 0 20 17"><path d="M1,6 L10,1 L19,6 V16 H1 Z" fill="#0c64c8"/><path d="M1,6 L10,11.5 L19,6 V16 H1 Z" fill="#2f8ae6"/><path d="M3.5,5 V3.5 H16.5 V5 L10,9 Z" fill="#fff" opacity="0.9"/></svg>
<!-- telegram -->
<svg class="a" style="left:671px;top:657px" width="18" height="18" viewBox="0 0 18 18"><circle cx="9" cy="9" r="8.7" fill="#2ea2df"/><path d="M4,8.8 L13.2,5 L11.8,13 L8.7,10.8 L7.3,12.3 L7.3,10 L11.5,6.5 L6.5,9.6 Z" fill="#fff"/></svg>
<!-- powerpoint -->
<div class="a" style="left:701px;top:650.5px;width:37px;height:31px;background:rgba(255,255,255,.45)"></div>
<svg class="a" style="left:710px;top:657px" width="20" height="18" viewBox="0 0 20 18"><rect x="7" y="1.5" width="12" height="15" fill="#fff" stroke="#d35230" stroke-width="1"/><path d="M10,5 H17 M10,8 H17 M10,11 H15" stroke="#ec8a62" stroke-width="1"/><rect x="1" y="3" width="11" height="12" fill="#d35230"/><path d="M4,13 V5.5 H7 C9,5.5 9.5,6.5 9.5,7.8 C9.5,9 9,10 7,10 H5.5" fill="none" stroke="#fff" stroke-width="1.5"/></svg>
<div class="a" style="left:701px;top:679.3px;width:37px;height:2px;background:#d04f95"></div>
<!-- tray -->
<svg class="a" style="left:864px;top:659px" width="14" height="13" viewBox="0 0 14 13"><path d="M3,7 C1,7 1,4 3.5,4 C4,1.5 8,1 9,3.5 C11.5,3 12.5,6.5 10.5,7 Z" fill="#b9d6ef"/><path d="M5,9 L4,12 M8,9 L7,12" stroke="#3f8fd8" stroke-width="1.2"/></svg>
<div class="a" style="left:889px;top:660.5px;font-size:11px;color:#333;white-space:nowrap;line-height:14px">12°C&nbsp; Light rain</div>
<svg class="a" style="left:977px;top:661px" width="11" height="8" viewBox="0 0 11 8"><path d="M1,7 L5.5,2 L10,7" fill="none" stroke="#333" stroke-width="1.2"/></svg>
<svg class="a" style="left:996px;top:659px" width="13" height="13" viewBox="0 0 13 13"><rect x="1.5" y="3" width="6.5" height="8" rx="1" fill="none" stroke="#444" stroke-width="1"/><rect x="6" y="5" width="5" height="5" rx="1" fill="#fff" stroke="#444" stroke-width="1"/></svg>
<svg class="a" style="left:1013px;top:658px" width="14" height="15" viewBox="0 0 14 15"><path d="M4,1 L7,3 L4,5 L1,3 Z M10,1 L13,3 L10,5 L7,3 Z M7,3 L10,5 L7,7 L4,5 Z" fill="#333"/><rect x="0.5" y="7" width="6" height="7" fill="#e21b1b"/><text x="3.5" y="13" font-size="6" fill="#fff" text-anchor="middle" font-family="Liberation Sans" font-weight="bold">1</text></svg>
<svg class="a" style="left:1031px;top:660px" width="15" height="11" viewBox="0 0 15 11"><rect x="1" y="3" width="12" height="6.5" fill="#222"/><rect x="13" y="5" width="1.5" height="2.5" fill="#222"/><path d="M2,1 L4,3" stroke="#222" stroke-width="1"/></svg>
<svg class="a" style="left:1050px;top:659px" width="14" height="13" viewBox="0 0 14 13"><path d="M1,12 A11,11 0 0 1 12,1 M3.5,12 A8.5,8.5 0 0 1 12,3.5 M6,12 A6,6 0 0 1 12,6 M8.5,12 A3.5,3.5 0 0 1 12,8.5" fill="none" stroke="#333" stroke-width="0.9"/></svg>
<svg class="a" style="left:1068px;top:659px" width="14" height="13" viewBox="0 0 14 13"><path d="M1,4.5 H3.5 L7,1.5 V11.5 L3.5,8.5 H1 Z" fill="none" stroke="#333" stroke-width="1"/><path d="M9,4.5 A2.5,2.5 0 0 1 9,8.5 M10.5,3 A4.5,4.5 0 0 1 10.5,10" fill="none" stroke="#333" stroke-width="0.9"/></svg>
<div class="a" style="left:1093px;top:661px;font-size:9.3px;color:#333;white-space:nowrap;line-height:12px">УКР</div>
<div class="a" style="left:1118px;top:653px;width:50px;font-size:8.9px;color:#333;white-space:nowrap;line-height:12px;text-align:center">16:58</div>
<div class="a" style="left:1118px;top:668px;width:50px;font-size:8.8px;color:#333;white-space:nowrap;line-height:12px;text-align:center">05.11.2021</div>
<svg class="a" style="left:1178px;top:658px" width="18" height="18" viewBox="0 0 18 18"><path d="M1,1 H13 V10 H5 L2,13 V10 H1 Z" fill="#222"/><path d="M3,3.5 H11 M3,5.5 H11 M3,7.5 H9" stroke="#fff" stroke-width="0.8"/><circle cx="12.5" cy="12.5" r="4.5" fill="#e8ecea" stroke="#666" stroke-width="0.8"/><text x="12.5" y="15.5" font-size="8" fill="#222" text-anchor="middle" font-family="Liberation Sans">1</text></svg>
<!-- slide -->
<div class="a" id="slide" style="left:301px;top:141px;width:809px;height:455px;background:linear-gradient(115deg,#f38b21 0%,#e56914 22%,#d8520a 50%,#c03807 78%,#9a1600 100%);overflow:hidden">
  <div class="a" style="left:0;top:172px;width:595px;height:110px;background:#262626;box-shadow:0 3px 5px rgba(0,0,0,.35)"></div>
  <div class="a" style="left:604px;top:172px;width:205px;height:110px;background:#f7931e;box-shadow:0 3px 5px rgba(0,0,0,.3)"></div>
  <div class="a" style="right:230px;top:192px;color:#fff;font-size:29.5px;text-align:right;white-space:nowrap;line-height:33.5px;-webkit-text-stroke:0.35px #fff">Виробнича Практика на базі ГУ ДСНС<br><span style="letter-spacing:0.62px">в Івано-Франківській області</span></div>
  <div class="a" style="right:230px;top:295.5px;color:#fff3ea;font-size:17px;text-align:right;white-space:nowrap;line-height:17px;-webkit-text-stroke:0.25px #fff3ea">Підготували студенти: Стецюк Анна, Турів Юлія, <u class="sq">Дуранович</u> Діана,<br><span style="letter-spacing:-0.1px"><u class="sq">Новоселюк</u> Валентина, Винниченко Віта, <u class="sq">Шулюк</u> Мар’яна</span></div>
</div>
<!-- popup -->
<div class="a" style="left:370.3px;top:584.8px;width:470.2px;height:33.3px;background:#fff;box-shadow:0 1px 4px rgba(0,0,0,.35)"></div>
<div class="a" style="left:379.5px;top:596px;width:1px;height:11px;background:#ccc"></div>
<div class="a" style="left:382px;top:596px;width:1px;height:11px;background:#ccc"></div>
<div class="a" style="left:391px;top:595.5px;font-size:9.35px;color:#3a3a3a;white-space:nowrap;line-height:12px">meet.google.com надає спільний доступ до екрана.</div>
<div class="a" style="left:621.4px;top:589.5px;width:151.1px;height:24.8px;background:#0b6fd4;border-radius:2px"></div>
<div class="a" style="left:621.4px;top:595.5px;width:151.1px;font-size:9.2px;color:#fff;white-space:nowrap;line-height:12px;text-align:center;font-weight:bold">Припинити спільний доступ</div>
<div class="a" style="left:782.4px;top:595.5px;font-size:9.35px;color:#1a62c0;white-space:nowrap;line-height:12px;text-decoration:underline">Приховати</div>
<!-- mouse cursor -->
<svg class="a" style="left:954px;top:570px" width="9" height="13" viewBox="0 0 9 13"><path d="M1,1 L1,10.5 L3.5,8.3 L5.3,12 L6.8,11.3 L5,7.6 L8,7.6 Z" fill="#fff" stroke="#111" stroke-width="0.8"/></svg>
</div>

<!-- tiles -->
<svg width="0" height="0" style="position:absolute">
<defs>
<filter id="bl" x="-10%" y="-10%" width="120%" height="120%"><feGaussianBlur stdDeviation="1.6"/></filter>
<filter id="bl2" x="-10%" y="-10%" width="120%" height="120%"><feGaussianBlur stdDeviation="0.9"/></filter>
<clipPath id="cc"><circle cx="50" cy="50" r="50"/></clipPath>
<symbol id="anna" viewBox="0 0 100 100"><g clip-path="url(#cc)">
 <rect width="100" height="100" fill="#356b26"/>
 <g filter="url(#bl)"><ellipse cx="15" cy="50" rx="22" ry="50" fill="#437f2f"/><ellipse cx="82" cy="55" rx="20" ry="45" fill="#2f6222"/><ellipse cx="60" cy="90" rx="25" ry="15" fill="#336c24"/>
 <rect x="37" y="0" width="7" height="16" fill="#e6ece6"/><rect x="96" y="35" width="6" height="28" fill="#d8dcc8"/></g>
 <g filter="url(#bl2)">
 <path d="M50,8 C64,8 72,22 72,40 C76,50 78,62 70,72 C62,68 58,60 56,52 L40,52 C34,54 30,52 28,46 C27,30 34,8 50,8 Z" fill="#d2ab78"/>
 <ellipse cx="47" cy="26" rx="7" ry="11" fill="#e7b898"/>
 <path d="M32,46 C40,42 56,42 62,50 L60,76 L30,78 C28,68 28,55 32,46 Z" fill="#e4161b"/>
 <path d="M24,66 L40,62 L38,84 L26,82 Z" fill="#e4161b"/><ellipse cx="31" cy="72" rx="7" ry="6" fill="#e8c0a8"/>
 <path d="M28,76 L56,74 L60,100 L26,100 Z" fill="#17171c"/>
 </g>
</g></symbol>
<symbol id="suit" viewBox="0 0 100 100"><circle cx="50" cy="50" r="50" fill="#04050a"/>
 <path d="M34,20 L50,30 L66,20 L62,50 L50,98 L38,50 Z" fill="#f2f2f2"/>
 <path d="M24,28 L34,20 L38,30 L50,98 L22,90 Z" fill="#0e0f15"/><path d="M76,28 L66,20 L62,30 L50,98 L78,90 Z" fill="#0e0f15"/>
 <path d="M34,20 L44,34 L38,36 Z" fill="#fff"/><path d="M66,20 L56,34 L62,36 Z" fill="#fff"/>
 <path d="M46,30 L54,30 L53,36 L56,78 L50,92 L44,78 L47,36 Z" fill="#07080c"/>
 <rect x="45" y="62" width="10" height="2" fill="#aaa"/>
 <path d="M65,56 L69,52 L71,55 L73,52 L77,56 Z" fill="#eee"/>
</symbol>
<symbol id="tonya" viewBox="0 0 100 100"><g clip-path="url(#cc)">
 <rect width="100" height="100" fill="#7d8a55"/>
 <g filter="url(#bl)"><rect width="100" height="28" fill="#7fb6ea"/><ellipse cx="50" cy="14" rx="30" ry="6" fill="#eaf3fb"/><ellipse cx="85" cy="22" rx="15" ry="4" fill="#dde9f5"/>
 <path d="M0,36 L18,20 L35,26 L60,30 L100,28 L100,40 L0,44 Z" fill="#4d5c3c"/>
 <rect x="0" y="42" width="100" height="32" fill="#8f8570"/><rect x="6" y="46" width="18" height="12" fill="#6a5646"/><rect x="70" y="48" width="25" height="12" fill="#7a6a5a"/><rect x="2" y="60" width="20" height="14" fill="#5a564e"/>
 <rect x="0" y="72" width="100" height="28" fill="#78a044"/></g>
 <g filter="url(#bl2)"><path d="M40,30 C44,18 60,18 64,30 L68,62 C62,66 44,66 36,62 Z" fill="#8a5838"/><ellipse cx="51" cy="36" rx="7" ry="10" fill="#e4b49c"/>
 <path d="M30,66 C38,56 62,54 72,64 L74,100 L28,100 Z" fill="#e02a2e"/><rect x="38" y="78" width="6" height="2" fill="#fff"/></g>
</g></symbol>
<symbol id="irina" viewBox="0 0 100 100"><g clip-path="url(#cc)">
 <rect width="100" height="100" fill="#8a7a70"/>
 <g filter="url(#bl)"><rect x="55" y="0" width="45" height="40" fill="#d8d0c8"/><rect x="0" y="40" width="20" height="60" fill="#d6ccc4"/><rect x="60" y="15" width="40" height="15" fill="#a89888"/></g>
 <g filter="url(#bl2)">
 <path d="M18,20 C22,4 50,0 58,18 L60,60 L20,62 C14,50 14,32 18,20 Z" fill="#4a3428"/>
 <ellipse cx="40" cy="34" rx="15" ry="20" fill="#f0d6c8"/><ellipse cx="36" cy="30" rx="3" ry="1.5" fill="#5a4a40"/><ellipse cx="48" cy="30" rx="3" ry="1.5" fill="#5a4a40"/>
 <path d="M10,62 C20,55 45,55 55,64 L50,100 L8,100 Z" fill="#121214"/>
 <path d="M48,40 C52,28 80,26 92,40 L96,80 L60,92 C50,80 46,60 48,40 Z" fill="#3a2820"/>
 <ellipse cx="70" cy="62" rx="17" ry="22" fill="#edc4b0"/><ellipse cx="62" cy="56" rx="3" ry="1.5" fill="#3a2a20"/><ellipse cx="77" cy="56" rx="3" ry="1.5" fill="#3a2a20"/><ellipse cx="66" cy="75" rx="5" ry="2.5" fill="#d8705a"/>
 <path d="M40,86 L70,88 L72,100 L38,100 Z" fill="#e0a878"/></g>
</g></symbol>
<symbol id="anast" viewBox="0 0 100 100"><g clip-path="url(#cc)">
 <rect width="100" height="100" fill="#d0d2da"/>
 <g filter="url(#bl)"><rect x="0" y="0" width="40" height="70" fill="#e6e8ee"/><rect x="45" y="0" width="55" height="45" fill="#6a68c0"/><rect x="60" y="5" width="20" height="20" fill="#a8a0e0"/><rect x="0" y="0" width="100" height="8" fill="#2a3a88"/>
 <rect x="60" y="45" width="40" height="25" fill="#c07088"/><rect x="62" y="58" width="38" height="10" fill="#e8e8f0"/>
 <rect x="0" y="68" width="100" height="32" fill="#d8b888"/><rect x="0" y="30" width="12" height="30" fill="#3a5aa8"/></g>
 <g filter="url(#bl2)"><path d="M38,12 C40,4 56,4 58,14 L60,40 L40,42 Z" fill="#8a6040"/><ellipse cx="49" cy="20" rx="6" ry="8" fill="#e8b8a0"/>
 <path d="M30,34 L64,32 L74,46 L62,100 L40,100 L34,58 L26,44 Z" fill="#141218"/><path d="M62,22 L72,16 L70,30 Z" fill="#e8b8a0"/></g>
</g></symbol>
<symbol id="vy" viewBox="0 0 100 100"><g clip-path="url(#cc)">
 <rect width="100" height="100" fill="#9a948e"/>
 <g filter="url(#bl)"><rect width="100" height="22" fill="#c8b8b4"/><rect x="0" y="22" width="45" height="45" fill="#c4c8cc"/><rect x="5" y="28" width="8" height="35" fill="#a84848"/><rect x="15" y="30" width="25" height="32" fill="#dde2e4"/>
 <rect x="65" y="24" width="35" height="40" fill="#b8bec2"/><ellipse cx="88" cy="56" rx="10" ry="10" fill="#4a5a3a"/>
 <rect x="0" y="64" width="100" height="36" fill="#a89e94"/><rect x="0" y="75" width="100" height="25" fill="#7a7066"/></g>
 <g filter="url(#bl2)"><path d="M40,22 C42,10 62,10 64,22 L68,58 L38,58 Z" fill="#9a7050"/><ellipse cx="52" cy="28" rx="6" ry="9" fill="#e0b8a0"/>
 <path d="M36,46 C44,40 62,40 70,48 L74,86 L38,88 Z" fill="#141416"/><path d="M34,84 L72,82 L76,100 L30,100 Z" fill="#8a7262"/></g>
</g></symbol>
<symbol id="sm1" viewBox="0 0 100 100"><g clip-path="url(#cc)">
 <rect width="100" height="100" fill="#d8c49a"/>
 <g filter="url(#bl)"><rect x="0" y="0" width="40" height="60" fill="#9a6a50"/><rect x="5" y="10" width="8" height="30" fill="#c04040"/><rect x="18" y="10" width="8" height="30" fill="#4060a0"/>
 <ellipse cx="60" cy="40" rx="16" ry="28" fill="#3a2a22"/><ellipse cx="60" cy="38" rx="9" ry="13" fill="#e8c0a8"/>
 <path d="M30,65 C45,55 80,55 90,70 L95,100 L25,100 Z" fill="#1a2240"/><rect x="55" y="60" width="12" height="30" fill="#e8d0e0"/></g>
</g></symbol>
<symbol id="sm2" viewBox="0 0 100 100"><g clip-path="url(#cc)">
 <rect width="100" height="100" fill="#2e6a2e"/>
 <g filter="url(#bl)"><rect x="0" y="0" width="55" height="80" fill="#c8a060"/><rect x="10" y="10" width="20" height="40" fill="#8a4a3a"/><ellipse cx="80" cy="50" rx="25" ry="50" fill="#3a7a32"/>
 <ellipse cx="55" cy="35" rx="8" ry="12" fill="#c09070"/><path d="M40,50 L70,50 L68,80 L42,80 Z" fill="#d8a098"/><rect x="45" y="80" width="20" height="20" fill="#1a1a1a"/></g>
</g></symbol>
</defs></svg>

<!-- video tile -->
<div class="tile" style="left:1242px;top:75px;background:#669df6">
 <div style="position:absolute;left:5px;top:5px;width:194px;height:151px;border-radius:4px;overflow:hidden;background:#e4e6e8">
  <svg width="194" height="151" viewBox="0 0 194 151" style="position:absolute;left:0;top:0">
   <g filter="url(#bl)">
   <rect x="0" y="0" width="194" height="151" fill="#dfe1e3"/>
   <rect x="0" y="0" width="45" height="151" fill="#e8eaec"/><path d="M0,55 L45,72 L45,151 L0,151 Z" fill="#eef0f1"/>
   <rect x="150" y="0" width="44" height="151" fill="#e4e0da"/>
   <rect x="70" y="0" width="72" height="4" fill="#c8984a"/>
   <rect x="182" y="0" width="6" height="151" fill="#c48e3c"/><rect x="188" y="0" width="6" height="151" fill="#ddd6ce"/>
   <rect x="150" y="49" width="38" height="4" fill="#c99645"/><rect x="150" y="79" width="38" height="4" fill="#c99645"/><rect x="150" y="103" width="38" height="4" fill="#c99645"/>
   <rect x="161" y="68" width="17" height="11" fill="#f8f6f2"/>
   <rect x="0" y="108" width="18" height="43" fill="#dcd8d0"/>
   <rect x="7" y="128" width="90" height="23" fill="#2a2a2d"/>
   <path d="M92,128 C125,120 170,120 194,126 L194,151 L88,151 Z" fill="#a8a4a1"/>
   <path d="M54,72 C52,50 60,30 70,24 L90,42 C110,36 128,44 135,60 C142,72 150,80 152,90 C150,115 140,135 118,145 C100,150 80,145 70,132 C60,118 55,95 54,72 Z" fill="#e7d5ce"/>
   <path d="M47,82 C44,55 48,30 62,16 C75,4 100,0 128,5 C148,12 158,35 158,62 C158,72 155,80 152,82 C145,72 138,62 133,58 C126,46 112,40 96,40 C80,40 70,45 67,50 C60,58 58,66 56,74 Z" fill="#1d1b1c"/>
   </g>
   <g filter="url(#bl2)">
   <path d="M56,72 C62,68 78,68 84,74 C88,82 84,96 72,98 C60,99 54,90 56,72 Z" fill="none" stroke="#4a2629" stroke-width="4.2"/>
   <path d="M86,72 C98,66 120,66 130,70 C130,84 120,96 104,96 C92,95 86,86 86,72 Z" fill="none" stroke="#4a2629" stroke-width="4.2"/>
   <path d="M130,69 L140,66" stroke="#4a2629" stroke-width="3"/>
   <ellipse cx="82" cy="103" rx="7" ry="6" fill="#e2b0a8"/>
   <ellipse cx="90" cy="120" rx="10" ry="4.5" fill="#d8a29a"/>
   <circle cx="140" cy="100" r="2" fill="none" stroke="#7a4a30" stroke-width="1"/>
   </g>
  </svg>
 </div>
 <div style="position:absolute;left:157px;top:10.8px;width:36px;height:36px;border-radius:50%;background:#1a73e8">
  <div style="position:absolute;left:6.9px;top:13.4px;width:6px;height:9.2px;border-radius:3px;background:#fff"></div>
  <div style="position:absolute;left:15px;top:10.1px;width:5.8px;height:16px;border-radius:3px;background:#fff"></div>
  <div style="position:absolute;left:23px;top:13.4px;width:6px;height:9.2px;border-radius:3px;background:#fff"></div>
 </div>
 <div class="name" style="left:22px;top:116px;text-shadow:0 0 3px rgba(0,0,0,.6),0 1px 2px rgba(0,0,0,.5)">Олександра Гр...</div>
</div>
<div class="tile" style="left:1462px;top:75px"><svg class="av" viewBox="0 0 100 100"><use href="#anna"/></svg><div class="name">Анна Стецюк</div></div>
<div class="tile" style="left:1682px;top:75px"><div class="mute"><svg width="24" height="24" viewBox="0 0 24 24" style="position:absolute;left:5.7px;top:6px"><path d="M19 11h-1.7c0 .74-.16 1.43-.43 2.05l1.23 1.23c.56-.98.9-2.09.9-3.28zm-4.02.17c0-.06.02-.11.02-.17V5c0-1.66-1.34-3-3-3S9 3.34 9 5v.18l5.98 5.99zM4.27 3L3 4.27l6.01 6.01V11c0 1.66 1.33 3 2.99 3 .22 0 .44-.03.65-.08l1.66 1.66c-.71.33-1.5.52-2.31.52-2.76 0-5.3-2.1-5.3-5.1H5c0 3.41 2.72 6.23 6 6.72V21h2v-3.28c.91-.13 1.77-.45 2.54-.9L19.73 21 21 19.73 4.27 3z" fill="#fff"/></svg></div><div class="av" style="background:#8d6e63"><span style="display:inline-block;transform:scale(0.83,1.07)">O</span></div><div class="name">Олена Хрущ</div></div>

<div class="tile" style="left:1242px;top:252px"><div class="mute"><svg width="24" height="24" viewBox="0 0 24 24" style="position:absolute;left:5.7px;top:6px"><path d="M19 11h-1.7c0 .74-.16 1.43-.43 2.05l1.23 1.23c.56-.98.9-2.09.9-3.28zm-4.02.17c0-.06.02-.11.02-.17V5c0-1.66-1.34-3-3-3S9 3.34 9 5v.18l5.98 5.99zM4.27 3L3 4.27l6.01 6.01V11c0 1.66 1.33 3 2.99 3 .22 0 .44-.03.65-.08l1.66 1.66c-.71.33-1.5.52-2.31.52-2.76 0-5.3-2.1-5.3-5.1H5c0 3.41 2.72 6.23 6 6.72V21h2v-3.28c.91-.13 1.77-.45 2.54-.9L19.73 21 21 19.73 4.27 3z" fill="#fff"/></svg></div><svg class="av" viewBox="0 0 100 100"><use href="#suit"/></svg><div class="name">Володимир Коб...</div></div>
<div class="tile" style="left:1462px;top:252px"><div class="mute"><svg width="24" height="24" viewBox="0 0 24 24" style="position:absolute;left:5.7px;top:6px"><path d="M19 11h-1.7c0 .74-.16 1.43-.43 2.05l1.23 1.23c.56-.98.9-2.09.9-3.28zm-4.02.17c0-.06.02-.11.02-.17V5c0-1.66-1.34-3-3-3S9 3.34 9 5v.18l5.98 5.99zM4.27 3L3 4.27l6.01 6.01V11c0 1.66 1.33 3 2.99 3 .22 0 .44-.03.65-.08l1.66 1.66c-.71.33-1.5.52-2.31.52-2.76 0-5.3-2.1-5.3-5.1H5c0 3.41 2.72 6.23 6 6.72V21h2v-3.28c.91-.13 1.77-.45 2.54-.9L19.73 21 21 19.73 4.27 3z" fill="#fff"/></svg></div><svg class="av" viewBox="0 0 100 100"><use href="#tonya"/></svg><div class="name">Тоня Волочій</div></div>
<div class="tile" style="left:1682px;top:252px"><div class="mute"><svg width="24" height="24" viewBox="0 0 24 24" style="position:absolute;left:5.7px;top:6px"><path d="M19 11h-1.7c0 .74-.16 1.43-.43 2.05l1.23 1.23c.56-.98.9-2.09.9-3.28zm-4.02.17c0-.06.02-.11.02-.17V5c0-1.66-1.34-3-3-3S9 3.34 9 5v.18l5.98 5.99zM4.27 3L3 4.27l6.01 6.01V11c0 1.66 1.33 3 2.99 3 .22 0 .44-.03.65-.08l1.66 1.66c-.71.33-1.5.52-2.31.52-2.76 0-5.3-2.1-5.3-5.1H5c0 3.41 2.72 6.23 6 6.72V21h2v-3.28c.91-.13 1.77-.45 2.54-.9L19.73 21 21 19.73 4.27 3z" fill="#fff"/></svg></div><div class="av" style="background:#f4511e">Н</div><div class="name">Надія Вітюк</div></div>

<div class="tile" style="left:1242px;top:430px"><div class="mute"><svg width="24" height="24" viewBox="0 0 24 24" style="position:absolute;left:5.7px;top:6px"><path d="M19 11h-1.7c0 .74-.16 1.43-.43 2.05l1.23 1.23c.56-.98.9-2.09.9-3.28zm-4.02.17c0-.06.02-.11.02-.17V5c0-1.66-1.34-3-3-3S9 3.34 9 5v.18l5.98 5.99zM4.27 3L3 4.27l6.01 6.01V11c0 1.66 1.33 3 2.99 3 .22 0 .44-.03.65-.08l1.66 1.66c-.71.33-1.5.52-2.31.52-2.76 0-5.3-2.1-5.3-5.1H5c0 3.41 2.72 6.23 6 6.72V21h2v-3.28c.91-.13 1.77-.45 2.54-.9L19.73 21 21 19.73 4.27 3z" fill="#fff"/></svg></div><div class="av" style="background:#455a64">Н</div><div class="name">Надія Курилюк</div></div>
<div class="tile" style="left:1462px;top:430px"><div class="mute"><svg width="24" height="24" viewBox="0 0 24 24" style="position:absolute;left:5.7px;top:6px"><path d="M19 11h-1.7c0 .74-.16 1.43-.43 2.05l1.23 1.23c.56-.98.9-2.09.9-3.28zm-4.02.17c0-.06.02-.11.02-.17V5c0-1.66-1.34-3-3-3S9 3.34 9 5v.18l5.98 5.99zM4.27 3L3 4.27l6.01 6.01V11c0 1.66 1.33 3 2.99 3 .22 0 .44-.03.65-.08l1.66 1.66c-.71.33-1.5.52-2.31.52-2.76 0-5.3-2.1-5.3-5.1H5c0 3.41 2.72 6.23 6 6.72V21h2v-3.28c.91-.13 1.77-.45 2.54-.9L19.73 21 21 19.73 4.27 3z" fill="#fff"/></svg></div><svg class="av" viewBox="0 0 100 100"><use href="#irina"/></svg><div class="name">Ірина Ковальчи...</div></div>
<div class="tile" style="left:1682px;top:430px"><div class="mute"><svg width="24" height="24" viewBox="0 0 24 24" style="position:absolute;left:5.7px;top:6px"><path d="M19 11h-1.7c0 .74-.16 1.43-.43 2.05l1.23 1.23c.56-.98.9-2.09.9-3.28zm-4.02.17c0-.06.02-.11.02-.17V5c0-1.66-1.34-3-3-3S9 3.34 9 5v.18l5.98 5.99zM4.27 3L3 4.27l6.01 6.01V11c0 1.66 1.33 3 2.99 3 .22 0 .44-.03.65-.08l1.66 1.66c-.71.33-1.5.52-2.31.52-2.76 0-5.3-2.1-5.3-5.1H5c0 3.41 2.72 6.23 6 6.72V21h2v-3.28c.91-.13 1.77-.45 2.54-.9L19.73 21 21 19.73 4.27 3z" fill="#fff"/></svg></div><svg class="av" viewBox="0 0 100 100"><use href="#anast"/></svg><div class="name">Анастасія Мель...</div></div>

<div class="tile" style="left:1242px;top:607px"><div class="mute"><svg width="24" height="24" viewBox="0 0 24 24" style="position:absolute;left:5.7px;top:6px"><path d="M19 11h-1.7c0 .74-.16 1.43-.43 2.05l1.23 1.23c.56-.98.9-2.09.9-3.28zm-4.02.17c0-.06.02-.11.02-.17V5c0-1.66-1.34-3-3-3S9 3.34 9 5v.18l5.98 5.99zM4.27 3L3 4.27l6.01 6.01V11c0 1.66 1.33 3 2.99 3 .22 0 .44-.03.65-.08l1.66 1.66c-.71.33-1.5.52-2.31.52-2.76 0-5.3-2.1-5.3-5.1H5c0 3.41 2.72 6.23 6 6.72V21h2v-3.28c.91-.13 1.77-.45 2.54-.9L19.73 21 21 19.73 4.27 3z" fill="#fff"/></svg></div><div class="av" style="background:#ec407a">В</div><div class="name">Вікторія Бріцька</div></div>
<div class="tile" style="left:1462px;top:607px">
 <svg style="position:absolute;left:65px;top:40px;width:42px;height:42px" viewBox="0 0 100 100"><use href="#sm1"/></svg>
 <div style="position:absolute;left:100px;top:39px;width:44px;height:44px;border-radius:50%;background:#3c4043"></div>
 <svg style="position:absolute;left:101px;top:40px;width:42px;height:42px" viewBox="0 0 100 100"><use href="#sm2"/></svg>
 <div class="name" style="left:0;top:97.6px;width:204px;text-align:center;font-size:19px;font-weight:normal;letter-spacing:0.25px;-webkit-text-stroke:0.45px #fff">Ще 12 осіб</div>
</div>
<div class="tile" style="left:1682px;top:607px"><div class="mute"><svg width="24" height="24" viewBox="0 0 24 24" style="position:absolute;left:5.7px;top:6px"><path d="M19 11h-1.7c0 .74-.16 1.43-.43 2.05l1.23 1.23c.56-.98.9-2.09.9-3.28zm-4.02.17c0-.06.02-.11.02-.17V5c0-1.66-1.34-3-3-3S9 3.34 9 5v.18l5.98 5.99zM4.27 3L3 4.27l6.01 6.01V11c0 1.66 1.33 3 2.99 3 .22 0 .44-.03.65-.08l1.66 1.66c-.71.33-1.5.52-2.31.52-2.76 0-5.3-2.1-5.3-5.1H5c0 3.41 2.72 6.23 6 6.72V21h2v-3.28c.91-.13 1.77-.45 2.54-.9L19.73 21 21 19.73 4.27 3z" fill="#fff"/></svg></div><svg class="av" viewBox="0 0 100 100"><use href="#vy"/></svg><div class="name">Ви</div></div>

<!-- bottom bar -->
<div class="a" style="left:21px;top:812px;color:#fff;font-size:20.5px;font-weight:bold">16:58</div>
<div class="a" style="left:91px;top:811px;width:1px;height:24px;background:#bbb"></div>
<div class="a" style="left:109px;top:811px;color:#fff;font-size:21px;letter-spacing:1.2px;font-weight:bold">tww-nsqc-vbz</div>

<div class="btn red" style="left:727px"><svg width="26" height="26" viewBox="0 0 24 24" style="position:absolute;left:14.5px;top:13.5px"><path d="M19 11h-1.7c0 .74-.16 1.43-.43 2.05l1.23 1.23c.56-.98.9-2.09.9-3.28zm-4.02.17c0-.06.02-.11.02-.17V5c0-1.66-1.34-3-3-3S9 3.34 9 5v.18l5.98 5.99zM4.27 3L3 4.27l6.01 6.01V11c0 1.66 1.33 3 2.99 3 .22 0 .44-.03.65-.08l1.66 1.66c-.71.33-1.5.52-2.31.52-2.76 0-5.3-2.1-5.3-5.1H5c0 3.41 2.72 6.23 6 6.72V21h2v-3.28c.91-.13 1.77-.45 2.54-.9L19.73 21 21 19.73 4.27 3z" fill="#fff"/></svg></div>
<div class="btn red" style="left:798px"><svg width="27" height="27" viewBox="0 0 24 24" style="position:absolute;left:14px;top:13.5px"><path d="M18 10.48V6c0-1.1-.9-2-2-2H6.83l2 2H16v7.17l2 2v-1.65l4 3.98v-11l-4 3.98zM16 16L6 6 2.81 2.81 1.39 4.22l.85.85C2.09 5.35 2 5.66 2 6v12c0 1.1.9 2 2 2h12c.34 0 .65-.09.93-.24l2.85 2.85 1.41-1.41L18 18l-2-2zM4 18V6.83L15.17 18H4z" fill="#fff"/></svg></div>
<div class="btn" style="left:870px"><svg width="45" height="45" viewBox="0 0 45 45" style="position:absolute;left:5px;top:4px"><path d="M10.5,22.8 Q12.5,20.5 15.3,21.6 L17.5,25.5 L17.5,11 Q17.5,9 19.4,9 Q21.3,9 21.3,10.8 L21.3,9.2 Q21.3,7.2 23.2,7.2 Q25.2,7.2 25.2,9.2 L25.2,10.8 Q25.3,8.8 27.2,8.8 Q29.2,8.8 29.2,11 L29.2,14 Q29.3,12.4 31.2,12.4 Q33.3,12.4 33.3,14.8 L33.3,29 Q33.3,38.6 23.5,38.6 Q16.8,38.6 14.3,31.5 Z" fill="none" stroke="#fff" stroke-width="2.6" stroke-linejoin="round"/><path d="M21.3,10.5 V23.5 M25.2,10 V23.5 M29.2,13 V23.5" stroke="#fff" stroke-width="2.4" fill="none"/></svg></div>
<div class="btn" style="left:941px"><svg width="33" height="33" viewBox="0 0 24 24" style="position:absolute;left:11px;top:11px"><path d="M21 3H3c-1.11 0-2 .89-2 2v14c0 1.11.89 2 2 2h18c1.11 0 2-.89 2-2V5c0-1.11-.89-2-2-2zm0 16.02H3V4.98h18v14.04zM10 12H8l4-4 4 4h-2v4h-4v-4z" fill="#fff"/></svg></div>
<div class="btn" style="left:1013px"><svg width="34" height="34" viewBox="0 0 24 24" style="position:absolute;left:10.5px;top:10.5px"><circle cx="12" cy="6" r="2.1" fill="#fff"/><circle cx="12" cy="12" r="2.1" fill="#fff"/><circle cx="12" cy="18" r="2.1" fill="#fff"/></svg></div>
<div class="a red" style="left:1084px;top:796px;width:77px;height:55px;border-radius:28px"><svg width="35" height="35" viewBox="0 0 24 24" style="position:absolute;left:21px;top:10px"><path d="M12 9c-1.6 0-3.15.25-4.6.72v3.1c0 .39-.23.74-.56.9-.98.49-1.87 1.12-2.66 1.85-.18.18-.43.28-.7.28-.28 0-.53-.11-.71-.29L.29 13.08c-.18-.17-.29-.42-.29-.7 0-.28.11-.53.29-.71C3.34 8.78 7.46 7 12 7s8.66 1.78 11.71 4.67c.18.18.29.43.29.71 0 .28-.11.53-.29.71l-2.48 2.48c-.18.18-.43.29-.71.29-.27 0-.52-.11-.7-.28-.79-.74-1.69-1.36-2.67-1.85-.33-.16-.56-.5-.56-.9v-3.1C15.15 9.25 13.6 9 12 9z" fill="#fff"/></svg></div>

<!-- right icons -->
<svg class="a" style="left:1634px;top:805.5px" width="35" height="35" viewBox="0 0 24 24"><path d="M11 7h2v2h-2zm0 4h2v6h-2zm1-9C6.48 2 2 6.48 2 12s4.48 10 10 10 10-4.48 10-10S17.52 2 12 2zm0 18c-4.41 0-8-3.59-8-8s3.59-8 8-8 8 3.59 8 8-3.59 8-8 8z" fill="#fff"/></svg>
<svg class="a" style="left:1700px;top:810px" width="36" height="27" viewBox="0 0 36 27"><circle cx="14" cy="8.3" r="4.2" fill="none" stroke="#fff" stroke-width="2.6"/><path d="M3.5,25 V22 C3.5,18.5 8,16.5 14,16.5 C20,16.5 24.5,18.5 24.5,22 V25 Z" fill="none" stroke="#fff" stroke-width="2.6" stroke-linejoin="round"/><path d="M21,3.6 C22,3.2 23,3 24,3 C27,3 29.5,5.4 29.5,8.3 C29.5,11.2 27,13.6 24,13.6 C23,13.6 22,13.4 21,13 C22.6,11.5 23.5,10 23.5,8.3 C23.5,6.6 22.6,5 21,3.6 Z" fill="#fff"/><path d="M26,16.8 C30.5,17.5 34,19.3 34,22 V26.3 H28 V22 C28,20 27.3,18.3 26,16.8 Z" fill="#fff"/></svg>
<div class="a" style="left:1720px;top:783px;width:27px;height:27px;border-radius:50%;background:#5f6368;color:#fff;font-size:14.5px;font-weight:bold;text-align:center;line-height:27px">24</div>
<svg class="a" style="left:1767px;top:806px" width="35" height="35" viewBox="0 0 24 24"><path d="M4 4h16v12H5.17L4 17.17V4m0-2c-1.1 0-1.99.9-1.99 2L2 22l4-4h14c1.1 0 2-.9 2-2V4c0-1.1-.9-2-2-2H4zm2 10h8v2H6v-2zm0-3h12v2H6V9zm0-3h12v2H6V6z" fill="#fff"/></svg>
<svg class="a" style="left:1833px;top:806px" width="35" height="35" viewBox="0 0 24 24"><path d="M12 2l-5.5 9h11L12 2zm0 3.84L13.93 9h-3.87L12 5.84zM17.5 13c-2.49 0-4.5 2.01-4.5 4.5s2.01 4.5 4.5 4.5 4.5-2.01 4.5-4.5-2.01-4.5-4.5-4.5zm0 7c-1.38 0-2.5-1.12-2.5-2.5s1.12-2.5 2.5-2.5 2.5 1.12 2.5 2.5-1.12 2.5-2.5 2.5zM3 21.5h8v-8H3v8zm2-6h4v4H5v-4z" fill="#fff"/></svg>
</body></html>
